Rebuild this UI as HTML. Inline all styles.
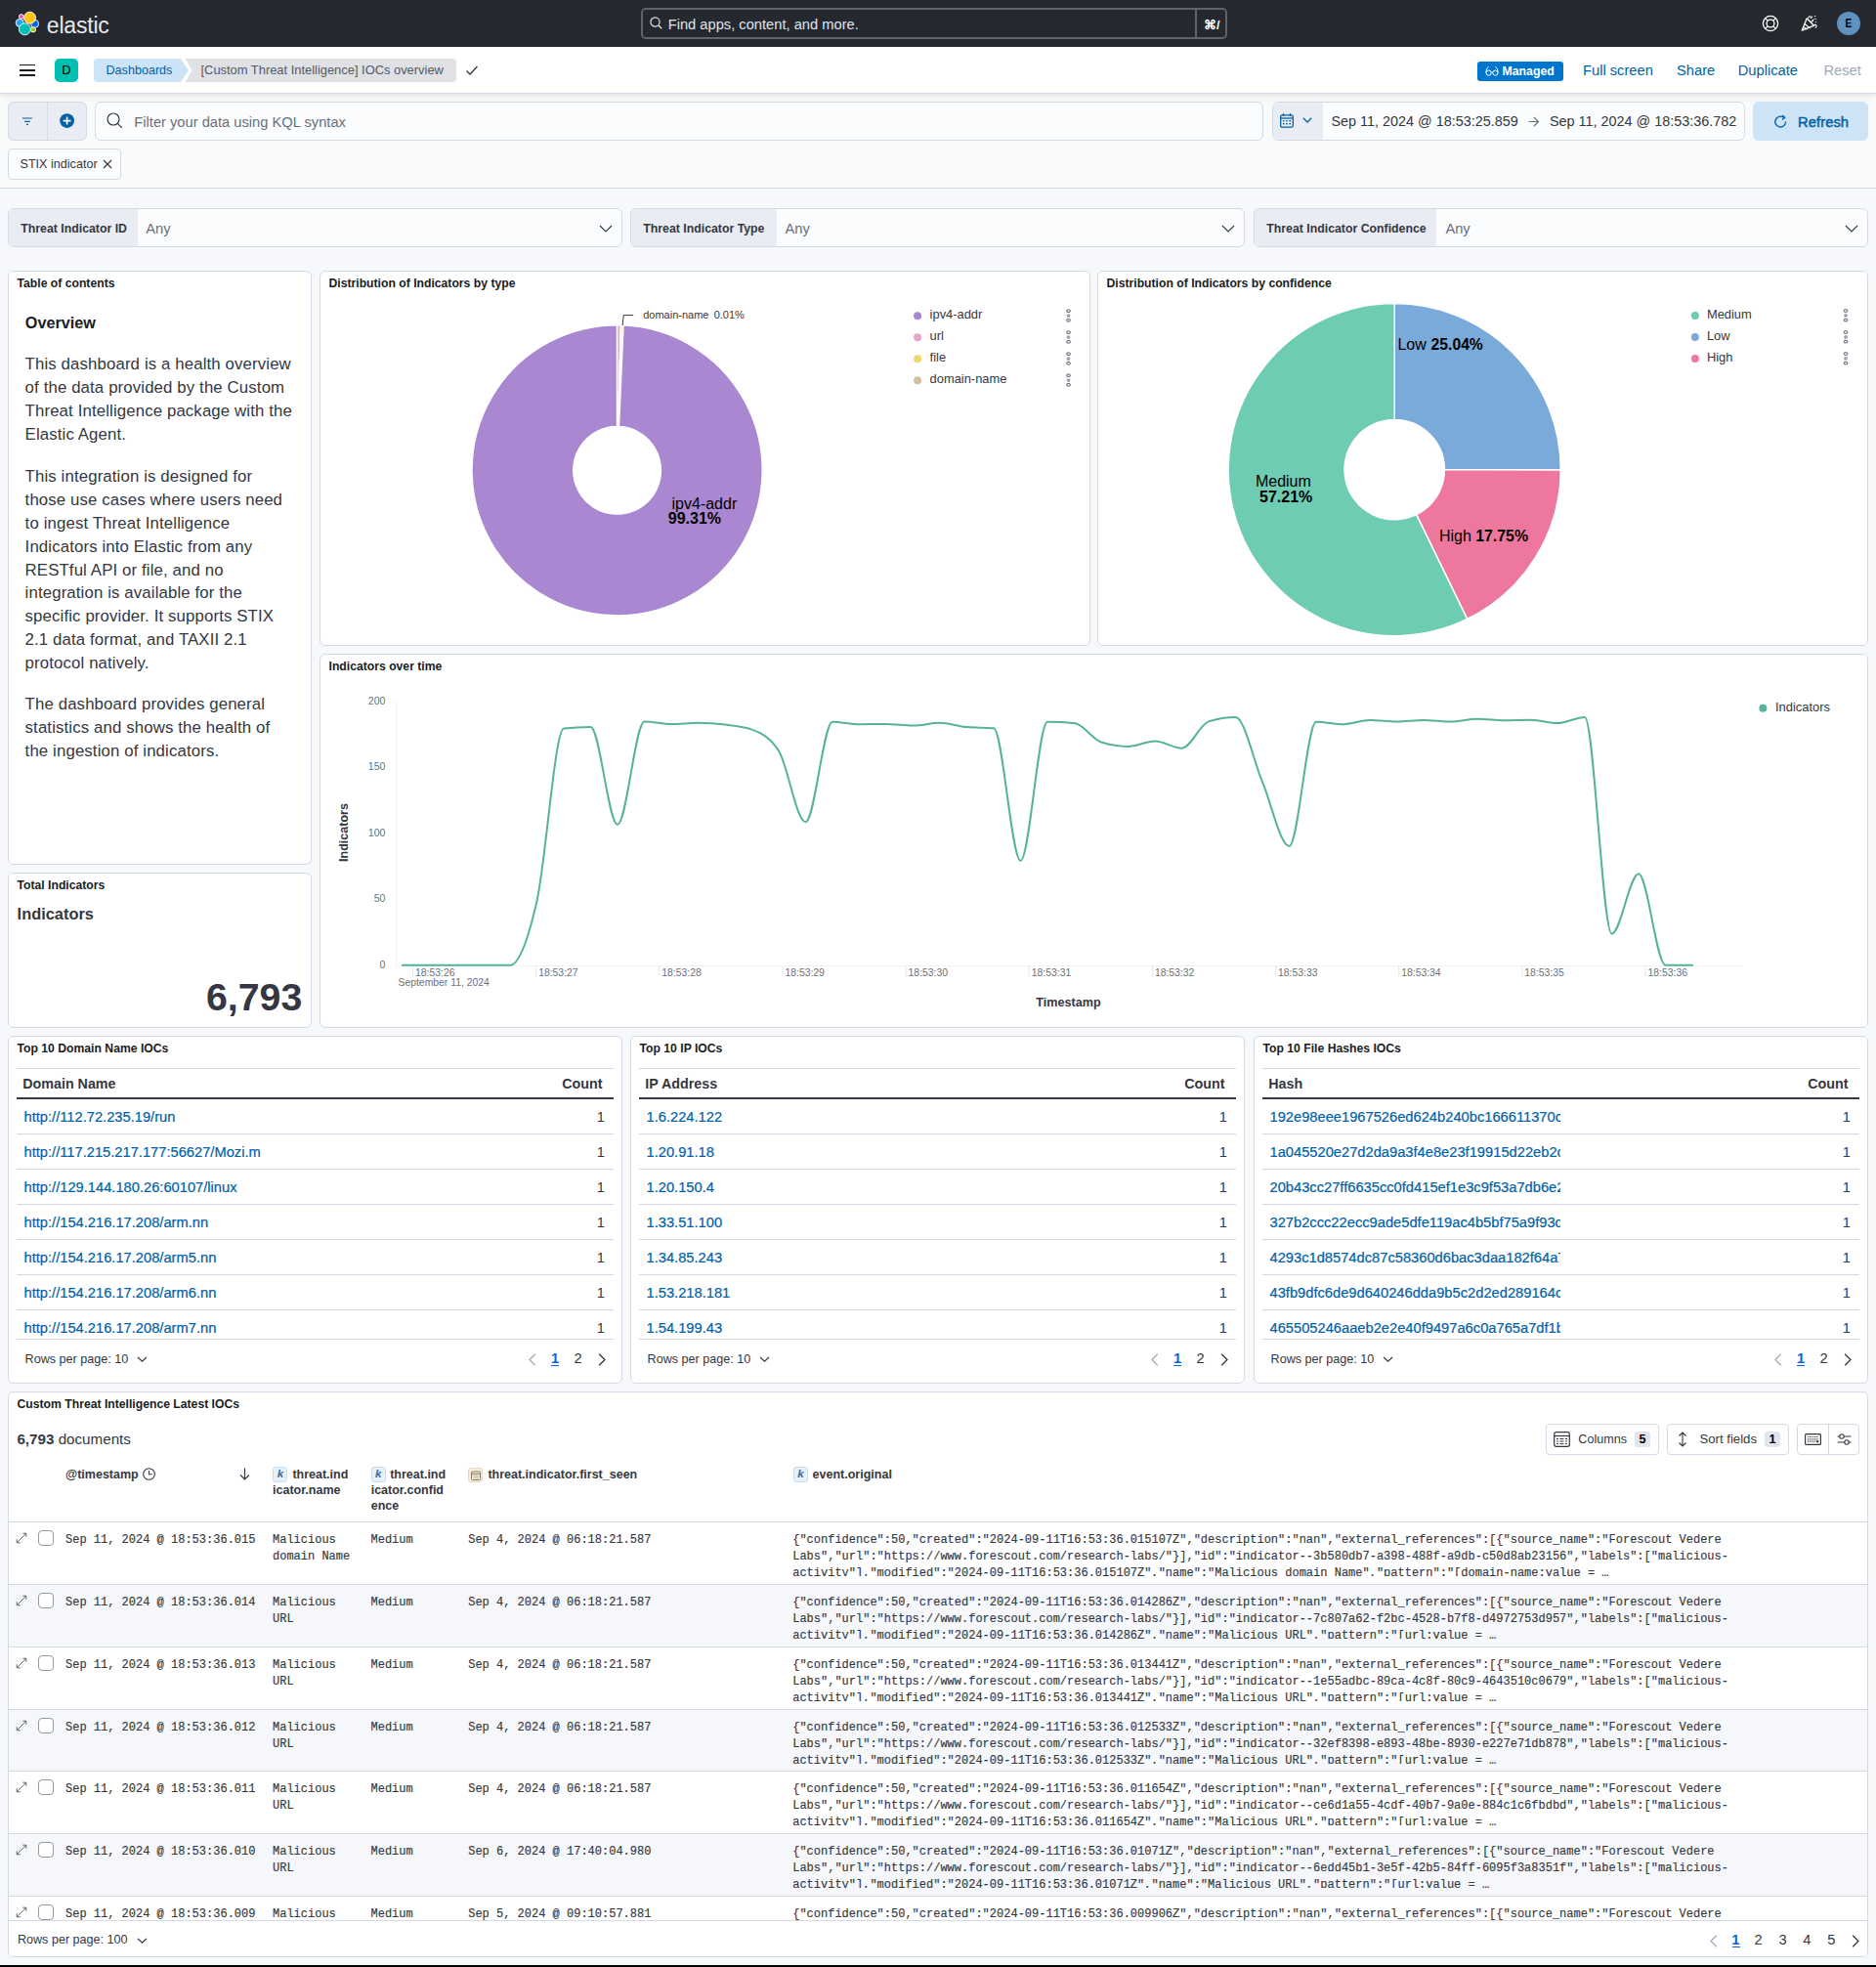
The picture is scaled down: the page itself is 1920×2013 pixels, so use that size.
<!DOCTYPE html>
<html><head><meta charset="utf-8"><title>Dashboard</title>
<style>
html,body{margin:0;padding:0;}
body{width:1920px;height:2013px;position:relative;overflow:hidden;background:#F7F8FC;font-family:"Liberation Sans",sans-serif;}
</style></head><body>
<div style="position:absolute;left:0px;top:0px;width:1920px;height:48px;box-sizing:border-box;background:#25282F;"></div>
<svg style="position:absolute;left:10px;top:8px;overflow:visible;" width="30" height="30" viewBox="0 0 30 30">
      <g stroke="#FFFFFF" stroke-width="0.9">
      <circle cx="11.8" cy="9.0" r="2.4" fill="#F04E98"/>
      <circle cx="10.2" cy="15.4" r="4.0" fill="#1BA9F5"/>
      <circle cx="25.6" cy="16.3" r="4.0" fill="#0B64DD"/>
      <circle cx="24.0" cy="22.4" r="2.6" fill="#93C90E"/>
      <circle cx="20.5" cy="10.2" r="6.0" fill="#FEC514"/>
      <circle cx="15.4" cy="21.8" r="6.0" fill="#00BFB3"/>
      </g>
    </svg>
<div style="position:absolute;left:47.80px;top:14.53px;font-size:23.0px;line-height:23.0px;color:#E6E8EC;font-family:'Liberation Sans', sans-serif;white-space:pre;letter-spacing:-0.2px;">elastic</div>
<div style="position:absolute;left:656px;top:8px;width:600px;height:32px;box-sizing:border-box;border:2px solid #5F636B;border-radius:5px;"></div>
<div style="position:absolute;left:1223px;top:9px;width:2px;height:30px;box-sizing:border-box;background:#5F636B;"></div>
<svg style="position:absolute;left:665px;top:17px;overflow:visible;" width="13" height="13" viewBox="0 0 13 13"><circle cx="5.5" cy="5.5" r="4.6" fill="none" stroke="#DFE5EF" stroke-width="1.2"/><path d="M9 9 L12.2 12.2" stroke="#DFE5EF" stroke-width="1.3"/></svg>
<div style="position:absolute;left:683.70px;top:17.95px;font-size:14.7px;line-height:14.7px;color:#DFE5EF;font-family:'Liberation Sans', sans-serif;white-space:pre;">Find apps, content, and more.</div>
<div style="position:absolute;left:1232.00px;top:19.92px;font-size:12.5px;line-height:12.5px;color:#FFFFFF;font-family:'Liberation Sans', sans-serif;white-space:pre;font-weight:700;">⌘/</div>
<svg style="position:absolute;left:1803px;top:15px;overflow:visible;" width="18" height="18" viewBox="0 0 18 18"><circle cx="9" cy="9" r="7.6" fill="none" stroke="#fff" stroke-width="1.3"/><circle cx="9" cy="9" r="3.9" fill="none" stroke="#fff" stroke-width="1.3"/><path d="M3.6 3.6 L6.2 6.2 M14.4 3.6 L11.8 6.2 M3.6 14.4 L6.2 11.8 M14.4 14.4 L11.8 11.8" stroke="#fff" stroke-width="1.2"/></svg>
<svg style="position:absolute;left:1843px;top:15px;overflow:visible;" width="18" height="18" viewBox="0 0 18 18"><path d="M1.2 16.2 L6.2 3.8 L13.6 11.2 Z" fill="none" stroke="#fff" stroke-width="1.3" stroke-linejoin="round"/><path d="M4.2 9.5 L9.6 14.2 M3 12.6 L6.4 15.2" stroke="#fff" stroke-width="1.1"/><path d="M7.5 3.5 C8.5 0.8 11 1.4 10.2 4.2" fill="none" stroke="#fff" stroke-width="1.1"/><path d="M13.8 10.5 C16.5 9.8 17 12.6 14.6 13.4" fill="none" stroke="#fff" stroke-width="1.1"/><circle cx="11.6" cy="2.2" r="0.7" fill="#fff"/><circle cx="14.6" cy="1.4" r="0.7" fill="#fff"/><circle cx="15" cy="4.4" r="0.7" fill="#fff"/><circle cx="12.2" cy="6.6" r="0.7" fill="#fff"/><circle cx="15.6" cy="7.6" r="0.7" fill="#fff"/><path d="M10.2 7.8 L13.4 4.6" stroke="#fff" stroke-width="1.1"/></svg>
<div style="position:absolute;left:1880px;top:12px;width:24px;height:24px;box-sizing:border-box;background:#6092C0;border-radius:50%;"></div>
<div style="position:absolute;left:1192.00px;width:1400px;text-align:center;top:18.24px;font-size:12.0px;line-height:12.0px;color:#000000;font-family:'Liberation Sans', sans-serif;white-space:pre;font-weight:700;transform:scaleX(0.85);">E</div>
<div style="position:absolute;left:0px;top:96px;width:1920px;height:96px;box-sizing:border-box;background:#F9FAFC;"></div>
<div style="position:absolute;left:0px;top:48px;width:1920px;height:48px;box-sizing:border-box;background:#FFFFFF;border-bottom:1px solid #D3DAE6;box-shadow:0 1px 5px rgba(0,0,0,0.07), 0 3.6px 9px rgba(0,0,0,0.04);"></div>
<div style="position:absolute;left:20px;top:65.8px;width:16px;height:1.7000000000000028px;box-sizing:border-box;background:#1A1C21;"></div>
<div style="position:absolute;left:20px;top:71.0px;width:16px;height:1.7000000000000028px;box-sizing:border-box;background:#1A1C21;"></div>
<div style="position:absolute;left:20px;top:76.3px;width:16px;height:1.7000000000000028px;box-sizing:border-box;background:#1A1C21;"></div>
<div style="position:absolute;left:56px;top:60px;width:24px;height:24px;box-sizing:border-box;background:#00BFB3;border-radius:5px;"></div>
<div style="position:absolute;left:-632.00px;width:1400px;text-align:center;top:65.39px;font-size:13.0px;line-height:13.0px;color:#000000;font-family:'Liberation Sans', sans-serif;white-space:pre;">D</div>
<svg style="position:absolute;left:96px;top:60px;overflow:visible;" width="380" height="24" viewBox="0 0 380 24"><path d="M4 0 L89 0 L97 12 L89 24 L4 24 Q0 24 0 20 L0 4 Q0 0 4 0 Z" fill="#CCE4F5"/><path d="M93.6 0 L367 0 Q371 0 371 4 L371 20 Q371 24 367 24 L93.6 24 L100.6 12 Z" fill="#E0E1E4"/></svg>
<div style="position:absolute;left:108.50px;top:65.63px;font-size:12.6px;line-height:12.6px;color:#0061A6;font-family:'Liberation Sans', sans-serif;white-space:pre;">Dashboards</div>
<div style="position:absolute;left:205.50px;top:66.28px;font-size:12.9px;line-height:12.9px;color:#535966;font-family:'Liberation Sans', sans-serif;white-space:pre;">[Custom Threat Intelligence] IOCs overview</div>
<svg style="position:absolute;left:476px;top:66px;overflow:visible;" width="14" height="12" viewBox="0 0 14 12"><path d="M1.5 6.5 L5 10 L12.5 2" fill="none" stroke="#343741" stroke-width="1.3"/></svg>
<div style="position:absolute;left:1512px;top:63px;width:88px;height:20px;box-sizing:border-box;background:#0077CC;border-radius:3px;"></div>
<svg style="position:absolute;left:1520px;top:67px;overflow:visible;" width="14" height="12" viewBox="0 0 14 12"><circle cx="3.6" cy="7.6" r="2.6" fill="none" stroke="#fff" stroke-width="1"/><circle cx="10.4" cy="7.6" r="2.6" fill="none" stroke="#fff" stroke-width="1"/><path d="M6.2 7.2 Q7 6.4 7.8 7.2 M1 7.4 C1 4 2 2.2 3.6 1.4 M13 7.4 C13 4 12 2.2 10.4 1.4" fill="none" stroke="#fff" stroke-width="1"/></svg>
<div style="position:absolute;left:1537.50px;top:66.79px;font-size:12.3px;line-height:12.3px;color:#FFFFFF;font-family:'Liberation Sans', sans-serif;white-space:pre;font-weight:700;">Managed</div>
<div style="position:absolute;left:1620.00px;top:64.85px;font-size:14.7px;line-height:14.7px;color:#0061A6;font-family:'Liberation Sans', sans-serif;white-space:pre;">Full screen</div>
<div style="position:absolute;left:1716.00px;top:64.85px;font-size:14.7px;line-height:14.7px;color:#0061A6;font-family:'Liberation Sans', sans-serif;white-space:pre;">Share</div>
<div style="position:absolute;left:1778.70px;top:64.85px;font-size:14.7px;line-height:14.7px;color:#0061A6;font-family:'Liberation Sans', sans-serif;white-space:pre;">Duplicate</div>
<div style="position:absolute;left:1866.50px;top:64.85px;font-size:14.7px;line-height:14.7px;color:#A2ABBA;font-family:'Liberation Sans', sans-serif;white-space:pre;">Reset</div>
<div style="position:absolute;left:0px;top:192px;width:1920px;height:1px;box-sizing:border-box;background:#D3DAE6;"></div>
<div style="position:absolute;left:8px;top:104px;width:81px;height:40px;box-sizing:border-box;background:#E9EDF3;border:1px solid #D3DAE6;border-radius:6px;"></div>
<div style="position:absolute;left:48px;top:105px;width:1px;height:38px;box-sizing:border-box;background:#D3DAE6;"></div>
<svg style="position:absolute;left:21px;top:119px;overflow:visible;" width="14" height="10" viewBox="0 0 14 10"><path d="M1.9 2 H11.9 M4.2 5.3 H9.6 M5.9 8.4 H7.9" stroke="#0061A6" stroke-width="1.2"/></svg>
<svg style="position:absolute;left:61px;top:116px;overflow:visible;" width="16" height="16" viewBox="0 0 16 16"><circle cx="7.6" cy="7.6" r="7.4" fill="#0061A6"/><path d="M7.6 3.6 V11.6 M3.6 7.6 H11.6" stroke="#fff" stroke-width="1.6"/></svg>
<div style="position:absolute;left:97px;top:104px;width:1196px;height:40px;box-sizing:border-box;background:#FBFCFD;border:1px solid #D3DAE6;border-radius:6px;"></div>
<svg style="position:absolute;left:109px;top:115px;overflow:visible;" width="17" height="17" viewBox="0 0 17 17"><circle cx="7" cy="7" r="6" fill="none" stroke="#343741" stroke-width="1.2"/><path d="M11.3 11.3 L15.8 15.8" stroke="#343741" stroke-width="1.2"/></svg>
<div style="position:absolute;left:137.30px;top:117.75px;font-size:14.7px;line-height:14.7px;color:#69707D;font-family:'Liberation Sans', sans-serif;white-space:pre;">Filter your data using KQL syntax</div>
<div style="position:absolute;left:1302px;top:104px;width:484px;height:40px;box-sizing:border-box;background:#FBFCFD;border:1px solid #D3DAE6;border-radius:6px;"></div>
<div style="position:absolute;left:1303px;top:105px;width:51px;height:38px;box-sizing:border-box;background:#E9EDF3;border-radius:5px 0 0 5px;"></div>
<svg style="position:absolute;left:1310px;top:116px;overflow:visible;" width="14" height="15" viewBox="0 0 14 15"><rect x="0.7" y="1.8" width="12.6" height="12.4" rx="1.5" fill="none" stroke="#0061A6" stroke-width="1.3"/><path d="M0.7 5 H13.3" stroke="#0061A6" stroke-width="1.3"/><path d="M3.5 0 V3 M10.5 0 V3" stroke="#0061A6" stroke-width="1.3"/><g fill="#0061A6"><rect x="3" y="7" width="1.6" height="1.4"/><rect x="6.2" y="7" width="1.6" height="1.4"/><rect x="9.4" y="7" width="1.6" height="1.4"/><rect x="3" y="10" width="1.6" height="1.4"/><rect x="6.2" y="10" width="1.6" height="1.4"/><rect x="9.4" y="10" width="1.6" height="1.4"/></g></svg>
<svg style="position:absolute;left:1333px;top:120px;overflow:visible;" width="10" height="6" viewBox="0 0 10 6"><path d="M0.8 0.8 L5 5 L9.2 0.8" fill="none" stroke="#0061A6" stroke-width="1.3"/></svg>
<div style="position:absolute;left:1362.50px;top:117.01px;font-size:14.4px;line-height:14.4px;color:#343741;font-family:'Liberation Sans', sans-serif;white-space:pre;">Sep 11, 2024 @ 18:53:25.859</div>
<svg style="position:absolute;left:1564px;top:119px;overflow:visible;" width="12" height="11" viewBox="0 0 12 11"><path d="M0.5 5.5 H10.5 M6 1 L10.5 5.5 L6 10" fill="none" stroke="#69707D" stroke-width="1.2"/></svg>
<div style="position:absolute;left:1586.00px;top:117.01px;font-size:14.4px;line-height:14.4px;color:#343741;font-family:'Liberation Sans', sans-serif;white-space:pre;">Sep 11, 2024 @ 18:53:36.782</div>
<div style="position:absolute;left:1794px;top:104px;width:118px;height:40px;box-sizing:border-box;background:#CCE4F5;border-radius:6px;"></div>
<svg style="position:absolute;left:1815px;top:117px;overflow:visible;" width="15" height="15" viewBox="0 0 15 15"><path d="M12.6 7.5 A5.4 5.4 0 1 1 10.4 3.2" fill="none" stroke="#0061A6" stroke-width="1.4"/><path d="M9.2 1 L11.6 3.2 L9.2 5.6" fill="none" stroke="#0061A6" stroke-width="1.4"/></svg>
<div style="position:absolute;left:1840.00px;top:117.55px;font-size:14.7px;line-height:14.7px;color:#0061A6;font-family:'Liberation Sans', sans-serif;white-space:pre;letter-spacing:0.1px;-webkit-text-stroke:0.45px #0061A6;">Refresh</div>
<div style="position:absolute;left:8px;top:152px;width:116px;height:32px;box-sizing:border-box;background:#FCFDFE;border:1px solid #D3DAE6;border-radius:4px;"></div>
<div style="position:absolute;left:20.50px;top:161.53px;font-size:12.6px;line-height:12.6px;color:#343741;font-family:'Liberation Sans', sans-serif;white-space:pre;">STIX indicator</div>
<svg style="position:absolute;left:105px;top:163px;overflow:visible;" width="10" height="10" viewBox="0 0 10 10"><path d="M1 1 L9 9 M9 1 L1 9" stroke="#343741" stroke-width="1.2"/></svg>
<div style="position:absolute;left:8px;top:213px;width:629px;height:40px;box-sizing:border-box;background:#FBFCFD;border:1px solid #D3DAE6;border-radius:6px;"></div>
<div style="position:absolute;left:9px;top:214px;width:132px;height:38px;box-sizing:border-box;background:#E9EDF3;border-radius:5px 0 0 5px;"></div>
<div style="position:absolute;left:21.30px;top:228.29px;font-size:12.3px;line-height:12.3px;color:#343741;font-family:'Liberation Sans', sans-serif;white-space:pre;font-weight:700;">Threat Indicator ID</div>
<div style="position:absolute;left:149.30px;top:227.15px;font-size:14.7px;line-height:14.7px;color:#69707D;font-family:'Liberation Sans', sans-serif;white-space:pre;">Any</div>
<svg style="position:absolute;left:613px;top:230px;overflow:visible;" width="14" height="8" viewBox="0 0 14 8"><path d="M1 1 L7 7 L13 1" fill="none" stroke="#343741" stroke-width="1.1"/></svg>
<div style="position:absolute;left:645px;top:213px;width:629px;height:40px;box-sizing:border-box;background:#FBFCFD;border:1px solid #D3DAE6;border-radius:6px;"></div>
<div style="position:absolute;left:646px;top:214px;width:149px;height:38px;box-sizing:border-box;background:#E9EDF3;border-radius:5px 0 0 5px;"></div>
<div style="position:absolute;left:658.30px;top:228.29px;font-size:12.3px;line-height:12.3px;color:#343741;font-family:'Liberation Sans', sans-serif;white-space:pre;font-weight:700;">Threat Indicator Type</div>
<div style="position:absolute;left:803.50px;top:227.15px;font-size:14.7px;line-height:14.7px;color:#69707D;font-family:'Liberation Sans', sans-serif;white-space:pre;">Any</div>
<svg style="position:absolute;left:1250px;top:230px;overflow:visible;" width="14" height="8" viewBox="0 0 14 8"><path d="M1 1 L7 7 L13 1" fill="none" stroke="#343741" stroke-width="1.1"/></svg>
<div style="position:absolute;left:1283px;top:213px;width:629px;height:40px;box-sizing:border-box;background:#FBFCFD;border:1px solid #D3DAE6;border-radius:6px;"></div>
<div style="position:absolute;left:1284px;top:214px;width:186px;height:38px;box-sizing:border-box;background:#E9EDF3;border-radius:5px 0 0 5px;"></div>
<div style="position:absolute;left:1296.30px;top:228.29px;font-size:12.3px;line-height:12.3px;color:#343741;font-family:'Liberation Sans', sans-serif;white-space:pre;font-weight:700;">Threat Indicator Confidence</div>
<div style="position:absolute;left:1479.40px;top:227.15px;font-size:14.7px;line-height:14.7px;color:#69707D;font-family:'Liberation Sans', sans-serif;white-space:pre;">Any</div>
<svg style="position:absolute;left:1888px;top:230px;overflow:visible;" width="14" height="8" viewBox="0 0 14 8"><path d="M1 1 L7 7 L13 1" fill="none" stroke="#343741" stroke-width="1.1"/></svg>
<div style="position:absolute;left:8px;top:277px;width:311px;height:608px;box-sizing:border-box;background:#FFFFFF;border:1px solid #D3DAE6;border-radius:6px;"></div>
<div style="position:absolute;left:327px;top:277px;width:789px;height:384px;box-sizing:border-box;background:#FFFFFF;border:1px solid #D3DAE6;border-radius:6px;"></div>
<div style="position:absolute;left:1123px;top:277px;width:789px;height:384px;box-sizing:border-box;background:#FFFFFF;border:1px solid #D3DAE6;border-radius:6px;"></div>
<div style="position:absolute;left:8px;top:893px;width:311px;height:159px;box-sizing:border-box;background:#FFFFFF;border:1px solid #D3DAE6;border-radius:6px;"></div>
<div style="position:absolute;left:327px;top:669px;width:1585px;height:383px;box-sizing:border-box;background:#FFFFFF;border:1px solid #D3DAE6;border-radius:6px;"></div>
<div style="position:absolute;left:8px;top:1060px;width:629px;height:356px;box-sizing:border-box;background:#FFFFFF;border:1px solid #D3DAE6;border-radius:6px;"></div>
<div style="position:absolute;left:645px;top:1060px;width:629px;height:356px;box-sizing:border-box;background:#FFFFFF;border:1px solid #D3DAE6;border-radius:6px;"></div>
<div style="position:absolute;left:1283px;top:1060px;width:629px;height:356px;box-sizing:border-box;background:#FFFFFF;border:1px solid #D3DAE6;border-radius:6px;"></div>
<div style="position:absolute;left:8px;top:1424px;width:1904px;height:579px;box-sizing:border-box;background:#FFFFFF;border:1px solid #D3DAE6;border-radius:6px;"></div>
<div style="position:absolute;left:17.50px;top:284.27px;font-size:12.2px;line-height:12.2px;color:#1A1C21;font-family:'Liberation Sans', sans-serif;white-space:pre;font-weight:700;">Table of contents</div>
<div style="position:absolute;left:336.50px;top:284.27px;font-size:12.2px;line-height:12.2px;color:#1A1C21;font-family:'Liberation Sans', sans-serif;white-space:pre;font-weight:700;">Distribution of Indicators by type</div>
<div style="position:absolute;left:1132.50px;top:284.27px;font-size:12.2px;line-height:12.2px;color:#1A1C21;font-family:'Liberation Sans', sans-serif;white-space:pre;font-weight:700;">Distribution of Indicators by confidence</div>
<div style="position:absolute;left:17.50px;top:900.27px;font-size:12.2px;line-height:12.2px;color:#1A1C21;font-family:'Liberation Sans', sans-serif;white-space:pre;font-weight:700;">Total Indicators</div>
<div style="position:absolute;left:336.50px;top:676.27px;font-size:12.2px;line-height:12.2px;color:#1A1C21;font-family:'Liberation Sans', sans-serif;white-space:pre;font-weight:700;">Indicators over time</div>
<div style="position:absolute;left:17.50px;top:1067.27px;font-size:12.2px;line-height:12.2px;color:#1A1C21;font-family:'Liberation Sans', sans-serif;white-space:pre;font-weight:700;">Top 10 Domain Name IOCs</div>
<div style="position:absolute;left:654.50px;top:1067.27px;font-size:12.2px;line-height:12.2px;color:#1A1C21;font-family:'Liberation Sans', sans-serif;white-space:pre;font-weight:700;">Top 10 IP IOCs</div>
<div style="position:absolute;left:1292.50px;top:1067.27px;font-size:12.2px;line-height:12.2px;color:#1A1C21;font-family:'Liberation Sans', sans-serif;white-space:pre;font-weight:700;">Top 10 File Hashes IOCs</div>
<div style="position:absolute;left:17.50px;top:1431.27px;font-size:12.2px;line-height:12.2px;color:#1A1C21;font-family:'Liberation Sans', sans-serif;white-space:pre;font-weight:700;">Custom Threat Intelligence Latest IOCs</div>
<div style="position:absolute;left:25.80px;top:321.88px;font-size:16.2px;line-height:16.2px;color:#1A1C21;font-family:'Liberation Sans', sans-serif;white-space:pre;font-weight:700;">Overview</div>
<div style="position:absolute;left:25.60px;top:364.98px;font-size:16.8px;line-height:16.8px;color:#343741;font-family:'Liberation Sans', sans-serif;white-space:pre;letter-spacing:0.13px;">This dashboard is a health overview</div>
<div style="position:absolute;left:25.60px;top:388.88px;font-size:16.8px;line-height:16.8px;color:#343741;font-family:'Liberation Sans', sans-serif;white-space:pre;letter-spacing:0.13px;">of the data provided by the Custom</div>
<div style="position:absolute;left:25.60px;top:412.78px;font-size:16.8px;line-height:16.8px;color:#343741;font-family:'Liberation Sans', sans-serif;white-space:pre;letter-spacing:0.13px;">Threat Intelligence package with the</div>
<div style="position:absolute;left:25.60px;top:436.68px;font-size:16.8px;line-height:16.8px;color:#343741;font-family:'Liberation Sans', sans-serif;white-space:pre;letter-spacing:0.13px;">Elastic Agent.</div>
<div style="position:absolute;left:25.60px;top:479.98px;font-size:16.8px;line-height:16.8px;color:#343741;font-family:'Liberation Sans', sans-serif;white-space:pre;letter-spacing:0.13px;">This integration is designed for</div>
<div style="position:absolute;left:25.60px;top:503.88px;font-size:16.8px;line-height:16.8px;color:#343741;font-family:'Liberation Sans', sans-serif;white-space:pre;letter-spacing:0.13px;">those use cases where users need</div>
<div style="position:absolute;left:25.60px;top:527.78px;font-size:16.8px;line-height:16.8px;color:#343741;font-family:'Liberation Sans', sans-serif;white-space:pre;letter-spacing:0.13px;">to ingest Threat Intelligence</div>
<div style="position:absolute;left:25.60px;top:551.68px;font-size:16.8px;line-height:16.8px;color:#343741;font-family:'Liberation Sans', sans-serif;white-space:pre;letter-spacing:0.13px;">Indicators into Elastic from any</div>
<div style="position:absolute;left:25.60px;top:575.58px;font-size:16.8px;line-height:16.8px;color:#343741;font-family:'Liberation Sans', sans-serif;white-space:pre;letter-spacing:0.13px;">RESTful API or file, and no</div>
<div style="position:absolute;left:25.60px;top:599.48px;font-size:16.8px;line-height:16.8px;color:#343741;font-family:'Liberation Sans', sans-serif;white-space:pre;letter-spacing:0.13px;">integration is available for the</div>
<div style="position:absolute;left:25.60px;top:623.38px;font-size:16.8px;line-height:16.8px;color:#343741;font-family:'Liberation Sans', sans-serif;white-space:pre;letter-spacing:0.13px;">specific provider. It supports STIX</div>
<div style="position:absolute;left:25.60px;top:647.28px;font-size:16.8px;line-height:16.8px;color:#343741;font-family:'Liberation Sans', sans-serif;white-space:pre;letter-spacing:0.13px;">2.1 data format, and TAXII 2.1</div>
<div style="position:absolute;left:25.60px;top:671.18px;font-size:16.8px;line-height:16.8px;color:#343741;font-family:'Liberation Sans', sans-serif;white-space:pre;letter-spacing:0.13px;">protocol natively.</div>
<div style="position:absolute;left:25.60px;top:713.28px;font-size:16.8px;line-height:16.8px;color:#343741;font-family:'Liberation Sans', sans-serif;white-space:pre;letter-spacing:0.13px;">The dashboard provides general</div>
<div style="position:absolute;left:25.60px;top:737.18px;font-size:16.8px;line-height:16.8px;color:#343741;font-family:'Liberation Sans', sans-serif;white-space:pre;letter-spacing:0.13px;">statistics and shows the health of</div>
<div style="position:absolute;left:25.60px;top:761.08px;font-size:16.8px;line-height:16.8px;color:#343741;font-family:'Liberation Sans', sans-serif;white-space:pre;letter-spacing:0.13px;">the ingestion of indicators.</div>
<div style="position:absolute;left:17.60px;top:926.81px;font-size:16.4px;line-height:16.4px;color:#343741;font-family:'Liberation Sans', sans-serif;white-space:pre;font-weight:700;">Indicators</div>
<div style="position:absolute;left:-1090.70px;width:1400px;text-align:right;top:1000.72px;font-size:39.3px;line-height:39.3px;color:#343741;font-family:'Liberation Sans', sans-serif;white-space:pre;font-weight:700;">6,793</div>
<svg style="position:absolute;left:0;top:0;" width="1920" height="700" viewBox="0 0 1920 700"><path d="M631.50 332.70 A148.6 148.6 0 0 1 635.42 332.75 L632.68 436.52 A44.8 44.8 0 0 0 631.50 436.50 Z" fill="#E4A6C7" stroke="#FFFFFF" stroke-width="1.5" stroke-linejoin="round"/><path d="M635.42 332.75 A148.6 148.6 0 0 1 637.66 332.83 L633.36 436.54 A44.8 44.8 0 0 0 632.68 436.52 Z" fill="#F1D86F" stroke="#FFFFFF" stroke-width="1.5" stroke-linejoin="round"/><path d="M637.66 332.83 A148.6 148.6 0 0 1 638.03 332.84 L633.47 436.54 A44.8 44.8 0 0 0 633.36 436.54 Z" fill="#D2C0A0" stroke="#FFFFFF" stroke-width="1.5" stroke-linejoin="round"/><path d="M638.03 332.84 A148.6 148.6 0 1 1 631.50 332.70 L631.50 436.50 A44.8 44.8 0 1 0 633.47 436.54 Z" fill="#A987D1" stroke="#FFFFFF" stroke-width="1.5" stroke-linejoin="round"/><path d="M637.2 333 L638.2 322.6 L648.2 322.6" fill="none" stroke="#343741" stroke-width="1"/><circle cx="939.1" cy="323.3" r="4" fill="#A987D1"/><rect x="1091.8" y="317.0" width="3.4" height="2.4" rx="0.4" fill="none" stroke="#5A606B" stroke-width="1"/><circle cx="1093.5" cy="323.1" r="1.9" fill="#98A2B3"/><rect x="1091.8" y="326.6" width="3.4" height="2.4" rx="0.4" fill="none" stroke="#5A606B" stroke-width="1"/><circle cx="939.1" cy="345.3" r="4" fill="#E4A6C7"/><rect x="1091.8" y="339.0" width="3.4" height="2.4" rx="0.4" fill="none" stroke="#5A606B" stroke-width="1"/><circle cx="1093.5" cy="345.1" r="1.9" fill="#98A2B3"/><rect x="1091.8" y="348.6" width="3.4" height="2.4" rx="0.4" fill="none" stroke="#5A606B" stroke-width="1"/><circle cx="939.1" cy="367.3" r="4" fill="#F1D86F"/><rect x="1091.8" y="361.0" width="3.4" height="2.4" rx="0.4" fill="none" stroke="#5A606B" stroke-width="1"/><circle cx="1093.5" cy="367.1" r="1.9" fill="#98A2B3"/><rect x="1091.8" y="370.6" width="3.4" height="2.4" rx="0.4" fill="none" stroke="#5A606B" stroke-width="1"/><circle cx="939.1" cy="389.3" r="4" fill="#D2C0A0"/><rect x="1091.8" y="383.0" width="3.4" height="2.4" rx="0.4" fill="none" stroke="#5A606B" stroke-width="1"/><circle cx="1093.5" cy="389.1" r="1.9" fill="#98A2B3"/><rect x="1091.8" y="392.6" width="3.4" height="2.4" rx="0.4" fill="none" stroke="#5A606B" stroke-width="1"/><path d="M1427.20 310.50 A170.1 170.1 0 0 1 1597.30 481.03 L1478.40 480.73 A51.2 51.2 0 0 0 1427.20 429.40 Z" fill="#79AAD9" stroke="#FFFFFF" stroke-width="1.5" stroke-linejoin="round"/><path d="M1597.30 481.03 A170.1 170.1 0 0 1 1501.65 633.54 L1449.61 526.64 A51.2 51.2 0 0 0 1478.40 480.73 Z" fill="#EE789D" stroke="#FFFFFF" stroke-width="1.5" stroke-linejoin="round"/><path d="M1501.65 633.54 A170.1 170.1 0 1 1 1427.20 310.50 L1427.20 429.40 A51.2 51.2 0 1 0 1449.61 526.64 Z" fill="#6DCCB1" stroke="#FFFFFF" stroke-width="1.5" stroke-linejoin="round"/><circle cx="1734.9" cy="323.1" r="4" fill="#6DCCB1"/><rect x="1887.3" y="316.8" width="3.4" height="2.4" rx="0.4" fill="none" stroke="#5A606B" stroke-width="1"/><circle cx="1889.0" cy="322.90000000000003" r="1.9" fill="#98A2B3"/><rect x="1887.3" y="326.40000000000003" width="3.4" height="2.4" rx="0.4" fill="none" stroke="#5A606B" stroke-width="1"/><circle cx="1734.9" cy="345.1" r="4" fill="#79AAD9"/><rect x="1887.3" y="338.8" width="3.4" height="2.4" rx="0.4" fill="none" stroke="#5A606B" stroke-width="1"/><circle cx="1889.0" cy="344.90000000000003" r="1.9" fill="#98A2B3"/><rect x="1887.3" y="348.40000000000003" width="3.4" height="2.4" rx="0.4" fill="none" stroke="#5A606B" stroke-width="1"/><circle cx="1734.9" cy="367.1" r="4" fill="#EE789D"/><rect x="1887.3" y="360.8" width="3.4" height="2.4" rx="0.4" fill="none" stroke="#5A606B" stroke-width="1"/><circle cx="1889.0" cy="366.90000000000003" r="1.9" fill="#98A2B3"/><rect x="1887.3" y="370.40000000000003" width="3.4" height="2.4" rx="0.4" fill="none" stroke="#5A606B" stroke-width="1"/></svg>
<div style="position:absolute;left:658.20px;top:316.99px;font-size:11.0px;line-height:11.0px;color:#343741;font-family:'Liberation Sans', sans-serif;white-space:pre;">domain-name</div>
<div style="position:absolute;left:730.70px;top:316.99px;font-size:11.0px;line-height:11.0px;color:#343741;font-family:'Liberation Sans', sans-serif;white-space:pre;">0.01%</div>
<div style="position:absolute;left:20.90px;width:1400px;text-align:center;top:508.05px;font-size:16.0px;line-height:16.0px;color:#000000;font-family:'Liberation Sans', sans-serif;white-space:pre;">ipv4-addr</div>
<div style="position:absolute;left:10.90px;width:1400px;text-align:center;top:523.45px;font-size:16.0px;line-height:16.0px;color:#000000;font-family:'Liberation Sans', sans-serif;white-space:pre;font-weight:700;">99.31%</div>
<div style="position:absolute;left:951.60px;top:315.78px;font-size:12.9px;line-height:12.9px;color:#343741;font-family:'Liberation Sans', sans-serif;white-space:pre;">ipv4-addr</div>
<div style="position:absolute;left:951.60px;top:337.78px;font-size:12.9px;line-height:12.9px;color:#343741;font-family:'Liberation Sans', sans-serif;white-space:pre;">url</div>
<div style="position:absolute;left:951.60px;top:359.78px;font-size:12.9px;line-height:12.9px;color:#343741;font-family:'Liberation Sans', sans-serif;white-space:pre;">file</div>
<div style="position:absolute;left:951.60px;top:381.78px;font-size:12.9px;line-height:12.9px;color:#343741;font-family:'Liberation Sans', sans-serif;white-space:pre;">domain-name</div>
<div style="position:absolute;left:1746.90px;top:315.58px;font-size:12.9px;line-height:12.9px;color:#343741;font-family:'Liberation Sans', sans-serif;white-space:pre;">Medium</div>
<div style="position:absolute;left:1746.90px;top:337.58px;font-size:12.9px;line-height:12.9px;color:#343741;font-family:'Liberation Sans', sans-serif;white-space:pre;">Low</div>
<div style="position:absolute;left:1746.90px;top:359.58px;font-size:12.9px;line-height:12.9px;color:#343741;font-family:'Liberation Sans', sans-serif;white-space:pre;">High</div>
<div style="position:absolute;left:1430.40px;top:344.75px;font-size:16.0px;line-height:16.0px;color:#000000;font-family:'Liberation Sans', sans-serif;white-space:pre;">Low</div>
<div style="position:absolute;left:1464.60px;top:345.01px;font-size:15.7px;line-height:15.7px;color:#000000;font-family:'Liberation Sans', sans-serif;white-space:pre;font-weight:700;">25.04%</div>
<div style="position:absolute;left:613.40px;width:1400px;text-align:center;top:485.45px;font-size:16.0px;line-height:16.0px;color:#000000;font-family:'Liberation Sans', sans-serif;white-space:pre;">Medium</div>
<div style="position:absolute;left:616.20px;width:1400px;text-align:center;top:500.75px;font-size:16.0px;line-height:16.0px;color:#000000;font-family:'Liberation Sans', sans-serif;white-space:pre;font-weight:700;">57.21%</div>
<div style="position:absolute;left:1473.00px;top:541.35px;font-size:16.0px;line-height:16.0px;color:#000000;font-family:'Liberation Sans', sans-serif;white-space:pre;">High</div>
<div style="position:absolute;left:1510.20px;top:541.44px;font-size:15.9px;line-height:15.9px;color:#000000;font-family:'Liberation Sans', sans-serif;white-space:pre;font-weight:700;">17.75%</div>
<svg style="position:absolute;left:0;top:0;" width="1920" height="1060" viewBox="0 0 1920 1060"><path d="M405.5 717 V988.5 H1783" fill="none" stroke="#EEF0F4" stroke-width="1"/><path d="M422.5 988 V999" stroke="#E3E6EC" stroke-width="1"/><path d="M548.6 988 V999" stroke="#E3E6EC" stroke-width="1"/><path d="M674.8 988 V999" stroke="#E3E6EC" stroke-width="1"/><path d="M801.0 988 V999" stroke="#E3E6EC" stroke-width="1"/><path d="M927.1 988 V999" stroke="#E3E6EC" stroke-width="1"/><path d="M1053.2 988 V999" stroke="#E3E6EC" stroke-width="1"/><path d="M1179.4 988 V999" stroke="#E3E6EC" stroke-width="1"/><path d="M1305.6 988 V999" stroke="#E3E6EC" stroke-width="1"/><path d="M1431.7 988 V999" stroke="#E3E6EC" stroke-width="1"/><path d="M1557.9 988 V999" stroke="#E3E6EC" stroke-width="1"/><path d="M1684.0 988 V999" stroke="#E3E6EC" stroke-width="1"/><path d="M412.00 987.70 C421.17 987.70 430.33 987.70 439.50 987.70 C448.67 987.70 457.83 987.70 467.00 987.70 C476.17 987.70 485.33 987.70 494.50 987.70 C503.67 987.70 512.83 987.70 522.00 987.70 C531.17 987.70 540.33 962.35 549.50 922.00 C558.67 881.65 567.83 746.73 577.00 745.60 C586.17 744.47 595.33 743.90 604.50 743.90 C613.67 743.90 622.83 843.80 632.00 843.80 C641.17 843.80 650.33 738.50 659.50 738.50 C668.67 738.50 677.83 741.10 687.00 741.10 C696.17 741.10 705.33 739.70 714.50 739.70 C723.67 739.70 732.83 740.45 742.00 741.60 C751.17 742.75 760.33 743.27 769.50 746.60 C778.67 749.93 787.83 753.90 797.00 768.50 C806.17 783.10 815.33 841.20 824.50 841.20 C833.67 841.20 842.83 738.80 852.00 738.80 C861.17 738.80 870.33 741.20 879.50 741.20 C888.67 741.20 897.83 741.00 907.00 741.00 C916.17 741.00 925.33 742.60 934.50 742.60 C943.67 742.60 952.83 739.70 962.00 739.70 C971.17 739.70 980.33 743.37 989.50 744.10 C998.67 744.83 1007.83 744.47 1017.00 745.20 C1026.17 745.93 1035.33 880.80 1044.50 880.80 C1053.67 880.80 1062.83 738.80 1072.00 738.80 C1081.17 738.80 1090.33 739.17 1099.50 739.90 C1108.67 740.63 1117.83 756.50 1127.00 759.50 C1136.17 762.50 1145.33 764.00 1154.50 764.00 C1163.67 764.00 1172.83 758.60 1182.00 758.60 C1191.17 758.60 1200.33 765.70 1209.50 765.70 C1218.67 765.70 1227.83 741.27 1237.00 738.40 C1246.17 735.53 1255.33 734.10 1264.50 734.10 C1273.67 734.10 1282.83 778.23 1292.00 800.20 C1301.17 822.17 1310.33 865.90 1319.50 865.90 C1328.67 865.90 1337.83 738.80 1347.00 738.80 C1356.17 738.80 1365.33 741.20 1374.50 741.20 C1383.67 741.20 1392.83 736.90 1402.00 736.90 C1411.17 736.90 1420.33 738.40 1429.50 738.40 C1438.67 738.40 1447.83 736.90 1457.00 736.90 C1466.17 736.90 1475.33 738.60 1484.50 738.60 C1493.67 738.60 1502.83 735.80 1512.00 735.80 C1521.17 735.80 1530.33 737.20 1539.50 737.20 C1548.67 737.20 1557.83 736.80 1567.00 736.80 C1576.17 736.80 1585.33 740.00 1594.50 740.00 C1603.67 740.00 1612.83 733.90 1622.00 733.90 C1631.17 733.90 1640.33 955.60 1649.50 955.60 C1658.67 955.60 1667.83 894.30 1677.00 894.30 C1686.17 894.30 1695.33 987.70 1704.50 987.70 C1713.67 987.70 1722.83 987.70 1732.00 987.70" fill="none" stroke="#54B399" stroke-width="2" stroke-linejoin="round" stroke-linecap="round"/><circle cx="1804.4" cy="724.8" r="4" fill="#54B399"/></svg>
<div style="position:absolute;left:-1005.50px;width:1400px;text-align:right;top:982.02px;font-size:10.6px;line-height:10.6px;color:#69707D;font-family:'Liberation Sans', sans-serif;white-space:pre;">0</div>
<div style="position:absolute;left:-1005.50px;width:1400px;text-align:right;top:914.40px;font-size:10.6px;line-height:10.6px;color:#69707D;font-family:'Liberation Sans', sans-serif;white-space:pre;">50</div>
<div style="position:absolute;left:-1005.50px;width:1400px;text-align:right;top:846.77px;font-size:10.6px;line-height:10.6px;color:#69707D;font-family:'Liberation Sans', sans-serif;white-space:pre;">100</div>
<div style="position:absolute;left:-1005.50px;width:1400px;text-align:right;top:779.15px;font-size:10.6px;line-height:10.6px;color:#69707D;font-family:'Liberation Sans', sans-serif;white-space:pre;">150</div>
<div style="position:absolute;left:-1005.50px;width:1400px;text-align:right;top:711.52px;font-size:10.6px;line-height:10.6px;color:#69707D;font-family:'Liberation Sans', sans-serif;white-space:pre;">200</div>
<div style="position:absolute;left:425.00px;top:990.79px;font-size:10.4px;line-height:10.4px;color:#69707D;font-family:'Liberation Sans', sans-serif;white-space:pre;">18:53:26</div>
<div style="position:absolute;left:551.15px;top:990.79px;font-size:10.4px;line-height:10.4px;color:#69707D;font-family:'Liberation Sans', sans-serif;white-space:pre;">18:53:27</div>
<div style="position:absolute;left:677.30px;top:990.79px;font-size:10.4px;line-height:10.4px;color:#69707D;font-family:'Liberation Sans', sans-serif;white-space:pre;">18:53:28</div>
<div style="position:absolute;left:803.45px;top:990.79px;font-size:10.4px;line-height:10.4px;color:#69707D;font-family:'Liberation Sans', sans-serif;white-space:pre;">18:53:29</div>
<div style="position:absolute;left:929.60px;top:990.79px;font-size:10.4px;line-height:10.4px;color:#69707D;font-family:'Liberation Sans', sans-serif;white-space:pre;">18:53:30</div>
<div style="position:absolute;left:1055.75px;top:990.79px;font-size:10.4px;line-height:10.4px;color:#69707D;font-family:'Liberation Sans', sans-serif;white-space:pre;">18:53:31</div>
<div style="position:absolute;left:1181.90px;top:990.79px;font-size:10.4px;line-height:10.4px;color:#69707D;font-family:'Liberation Sans', sans-serif;white-space:pre;">18:53:32</div>
<div style="position:absolute;left:1308.05px;top:990.79px;font-size:10.4px;line-height:10.4px;color:#69707D;font-family:'Liberation Sans', sans-serif;white-space:pre;">18:53:33</div>
<div style="position:absolute;left:1434.20px;top:990.79px;font-size:10.4px;line-height:10.4px;color:#69707D;font-family:'Liberation Sans', sans-serif;white-space:pre;">18:53:34</div>
<div style="position:absolute;left:1560.35px;top:990.79px;font-size:10.4px;line-height:10.4px;color:#69707D;font-family:'Liberation Sans', sans-serif;white-space:pre;">18:53:35</div>
<div style="position:absolute;left:1686.50px;top:990.79px;font-size:10.4px;line-height:10.4px;color:#69707D;font-family:'Liberation Sans', sans-serif;white-space:pre;">18:53:36</div>
<div style="position:absolute;left:407.50px;top:1000.79px;font-size:10.4px;line-height:10.4px;color:#69707D;font-family:'Liberation Sans', sans-serif;white-space:pre;">September 11, 2024</div>
<div style="position:absolute;left:393.50px;width:1400px;text-align:center;top:1020.33px;font-size:12.6px;line-height:12.6px;color:#343741;font-family:'Liberation Sans', sans-serif;white-space:pre;font-weight:700;">Timestamp</div>
<div style="position:absolute;left:252px;top:845px;width:200px;height:14px;line-height:14px;text-align:center;font-size:12.5px;font-weight:700;color:#343741;font-family:'Liberation Sans', sans-serif;transform:rotate(-90deg);">Indicators</div>
<div style="position:absolute;left:1817.00px;top:717.68px;font-size:12.9px;line-height:12.9px;color:#343741;font-family:'Liberation Sans', sans-serif;white-space:pre;">Indicators</div>
<div style="position:absolute;left:17px;top:1093px;width:611px;height:1px;box-sizing:border-box;background:#D3DAE6;"></div>
<div style="position:absolute;left:23.20px;top:1102.39px;font-size:14.3px;line-height:14.3px;color:#343741;font-family:'Liberation Sans', sans-serif;white-space:pre;font-weight:700;">Domain Name</div>
<div style="position:absolute;left:-783.50px;width:1400px;text-align:right;top:1102.39px;font-size:14.3px;line-height:14.3px;color:#343741;font-family:'Liberation Sans', sans-serif;white-space:pre;font-weight:700;">Count</div>
<div style="position:absolute;left:17px;top:1123px;width:611px;height:2px;box-sizing:border-box;background:#343741;"></div>
<div style="position:absolute;left:17px;top:1125px;width:304.5px;height:35px;overflow:hidden;"><div style="position:absolute;left:7.5px;top:11.05px;font-size:14.7px;line-height:14.7px;color:#0061A6;font-family:'Liberation Sans', sans-serif;white-space:pre;-webkit-text-stroke:0.2px #0061A6;">http://112.72.235.19/run</div></div>
<div style="position:absolute;left:-781.00px;width:1400px;text-align:right;top:1136.05px;font-size:14.7px;line-height:14.7px;color:#343741;font-family:'Liberation Sans', sans-serif;white-space:pre;">1</div>
<div style="position:absolute;left:17px;top:1161px;width:304.5px;height:35px;overflow:hidden;"><div style="position:absolute;left:7.5px;top:11.05px;font-size:14.7px;line-height:14.7px;color:#0061A6;font-family:'Liberation Sans', sans-serif;white-space:pre;-webkit-text-stroke:0.2px #0061A6;">http://117.215.217.177:56627/Mozi.m</div></div>
<div style="position:absolute;left:-781.00px;width:1400px;text-align:right;top:1172.05px;font-size:14.7px;line-height:14.7px;color:#343741;font-family:'Liberation Sans', sans-serif;white-space:pre;">1</div>
<div style="position:absolute;left:17px;top:1197px;width:304.5px;height:35px;overflow:hidden;"><div style="position:absolute;left:7.5px;top:11.05px;font-size:14.7px;line-height:14.7px;color:#0061A6;font-family:'Liberation Sans', sans-serif;white-space:pre;-webkit-text-stroke:0.2px #0061A6;">http://129.144.180.26:60107/linux</div></div>
<div style="position:absolute;left:-781.00px;width:1400px;text-align:right;top:1208.05px;font-size:14.7px;line-height:14.7px;color:#343741;font-family:'Liberation Sans', sans-serif;white-space:pre;">1</div>
<div style="position:absolute;left:17px;top:1233px;width:304.5px;height:35px;overflow:hidden;"><div style="position:absolute;left:7.5px;top:11.05px;font-size:14.7px;line-height:14.7px;color:#0061A6;font-family:'Liberation Sans', sans-serif;white-space:pre;-webkit-text-stroke:0.2px #0061A6;">http://154.216.17.208/arm.nn</div></div>
<div style="position:absolute;left:-781.00px;width:1400px;text-align:right;top:1244.05px;font-size:14.7px;line-height:14.7px;color:#343741;font-family:'Liberation Sans', sans-serif;white-space:pre;">1</div>
<div style="position:absolute;left:17px;top:1269px;width:304.5px;height:35px;overflow:hidden;"><div style="position:absolute;left:7.5px;top:11.05px;font-size:14.7px;line-height:14.7px;color:#0061A6;font-family:'Liberation Sans', sans-serif;white-space:pre;-webkit-text-stroke:0.2px #0061A6;">http://154.216.17.208/arm5.nn</div></div>
<div style="position:absolute;left:-781.00px;width:1400px;text-align:right;top:1280.05px;font-size:14.7px;line-height:14.7px;color:#343741;font-family:'Liberation Sans', sans-serif;white-space:pre;">1</div>
<div style="position:absolute;left:17px;top:1305px;width:304.5px;height:35px;overflow:hidden;"><div style="position:absolute;left:7.5px;top:11.05px;font-size:14.7px;line-height:14.7px;color:#0061A6;font-family:'Liberation Sans', sans-serif;white-space:pre;-webkit-text-stroke:0.2px #0061A6;">http://154.216.17.208/arm6.nn</div></div>
<div style="position:absolute;left:-781.00px;width:1400px;text-align:right;top:1316.05px;font-size:14.7px;line-height:14.7px;color:#343741;font-family:'Liberation Sans', sans-serif;white-space:pre;">1</div>
<div style="position:absolute;left:17px;top:1341px;width:304.5px;height:35px;overflow:hidden;"><div style="position:absolute;left:7.5px;top:11.05px;font-size:14.7px;line-height:14.7px;color:#0061A6;font-family:'Liberation Sans', sans-serif;white-space:pre;-webkit-text-stroke:0.2px #0061A6;">http://154.216.17.208/arm7.nn</div></div>
<div style="position:absolute;left:-781.00px;width:1400px;text-align:right;top:1352.05px;font-size:14.7px;line-height:14.7px;color:#343741;font-family:'Liberation Sans', sans-serif;white-space:pre;">1</div>
<div style="position:absolute;left:17px;top:1160px;width:611px;height:1px;box-sizing:border-box;background:#D3DAE6;"></div>
<div style="position:absolute;left:17px;top:1196px;width:611px;height:1px;box-sizing:border-box;background:#D3DAE6;"></div>
<div style="position:absolute;left:17px;top:1232px;width:611px;height:1px;box-sizing:border-box;background:#D3DAE6;"></div>
<div style="position:absolute;left:17px;top:1268px;width:611px;height:1px;box-sizing:border-box;background:#D3DAE6;"></div>
<div style="position:absolute;left:17px;top:1304px;width:611px;height:1px;box-sizing:border-box;background:#D3DAE6;"></div>
<div style="position:absolute;left:17px;top:1340px;width:611px;height:1px;box-sizing:border-box;background:#D3DAE6;"></div>
<div style="position:absolute;left:17px;top:1370px;width:611px;height:1px;box-sizing:border-box;background:#D3DAE6;"></div>
<div style="position:absolute;left:25.60px;top:1384.63px;font-size:12.6px;line-height:12.6px;color:#343741;font-family:'Liberation Sans', sans-serif;white-space:pre;">Rows per page: 10</div>
<svg style="position:absolute;left:140px;top:1388px;" width="11" height="7" viewBox="0 0 11 7"><path d="M1 1 L5.5 5.2 L10 1" fill="none" stroke="#343741" stroke-width="1.2"/></svg>
<svg style="position:absolute;left:541px;top:1385px;" width="8" height="13" viewBox="0 0 8 13"><path d="M6.8 0.8 L1 6.5 L6.8 12.2" fill="none" stroke="#A2ABBA" stroke-width="1.3"/></svg>
<div style="position:absolute;left:-132.00px;width:1400px;text-align:center;top:1383.35px;font-size:14.7px;line-height:14.7px;color:#0B64DD;font-family:'Liberation Sans', sans-serif;white-space:pre;font-weight:700;">1</div>
<div style="position:absolute;left:564px;top:1396.6px;width:8px;height:1.6000000000001364px;box-sizing:border-box;background:#0B64DD;"></div>
<div style="position:absolute;left:-108.30px;width:1400px;text-align:center;top:1383.35px;font-size:14.7px;line-height:14.7px;color:#343741;font-family:'Liberation Sans', sans-serif;white-space:pre;">2</div>
<svg style="position:absolute;left:611.5px;top:1385px;" width="8" height="13" viewBox="0 0 8 13"><path d="M1.2 0.8 L7 6.5 L1.2 12.2" fill="none" stroke="#343741" stroke-width="1.3"/></svg>
<div style="position:absolute;left:654px;top:1093px;width:611px;height:1px;box-sizing:border-box;background:#D3DAE6;"></div>
<div style="position:absolute;left:660.20px;top:1102.39px;font-size:14.3px;line-height:14.3px;color:#343741;font-family:'Liberation Sans', sans-serif;white-space:pre;font-weight:700;">IP Address</div>
<div style="position:absolute;left:-146.50px;width:1400px;text-align:right;top:1102.39px;font-size:14.3px;line-height:14.3px;color:#343741;font-family:'Liberation Sans', sans-serif;white-space:pre;font-weight:700;">Count</div>
<div style="position:absolute;left:654px;top:1123px;width:611px;height:2px;box-sizing:border-box;background:#343741;"></div>
<div style="position:absolute;left:654px;top:1125px;width:304.5px;height:35px;overflow:hidden;"><div style="position:absolute;left:7.5px;top:11.05px;font-size:14.7px;line-height:14.7px;color:#0061A6;font-family:'Liberation Sans', sans-serif;white-space:pre;-webkit-text-stroke:0.2px #0061A6;">1.6.224.122</div></div>
<div style="position:absolute;left:-144.00px;width:1400px;text-align:right;top:1136.05px;font-size:14.7px;line-height:14.7px;color:#343741;font-family:'Liberation Sans', sans-serif;white-space:pre;">1</div>
<div style="position:absolute;left:654px;top:1161px;width:304.5px;height:35px;overflow:hidden;"><div style="position:absolute;left:7.5px;top:11.05px;font-size:14.7px;line-height:14.7px;color:#0061A6;font-family:'Liberation Sans', sans-serif;white-space:pre;-webkit-text-stroke:0.2px #0061A6;">1.20.91.18</div></div>
<div style="position:absolute;left:-144.00px;width:1400px;text-align:right;top:1172.05px;font-size:14.7px;line-height:14.7px;color:#343741;font-family:'Liberation Sans', sans-serif;white-space:pre;">1</div>
<div style="position:absolute;left:654px;top:1197px;width:304.5px;height:35px;overflow:hidden;"><div style="position:absolute;left:7.5px;top:11.05px;font-size:14.7px;line-height:14.7px;color:#0061A6;font-family:'Liberation Sans', sans-serif;white-space:pre;-webkit-text-stroke:0.2px #0061A6;">1.20.150.4</div></div>
<div style="position:absolute;left:-144.00px;width:1400px;text-align:right;top:1208.05px;font-size:14.7px;line-height:14.7px;color:#343741;font-family:'Liberation Sans', sans-serif;white-space:pre;">1</div>
<div style="position:absolute;left:654px;top:1233px;width:304.5px;height:35px;overflow:hidden;"><div style="position:absolute;left:7.5px;top:11.05px;font-size:14.7px;line-height:14.7px;color:#0061A6;font-family:'Liberation Sans', sans-serif;white-space:pre;-webkit-text-stroke:0.2px #0061A6;">1.33.51.100</div></div>
<div style="position:absolute;left:-144.00px;width:1400px;text-align:right;top:1244.05px;font-size:14.7px;line-height:14.7px;color:#343741;font-family:'Liberation Sans', sans-serif;white-space:pre;">1</div>
<div style="position:absolute;left:654px;top:1269px;width:304.5px;height:35px;overflow:hidden;"><div style="position:absolute;left:7.5px;top:11.05px;font-size:14.7px;line-height:14.7px;color:#0061A6;font-family:'Liberation Sans', sans-serif;white-space:pre;-webkit-text-stroke:0.2px #0061A6;">1.34.85.243</div></div>
<div style="position:absolute;left:-144.00px;width:1400px;text-align:right;top:1280.05px;font-size:14.7px;line-height:14.7px;color:#343741;font-family:'Liberation Sans', sans-serif;white-space:pre;">1</div>
<div style="position:absolute;left:654px;top:1305px;width:304.5px;height:35px;overflow:hidden;"><div style="position:absolute;left:7.5px;top:11.05px;font-size:14.7px;line-height:14.7px;color:#0061A6;font-family:'Liberation Sans', sans-serif;white-space:pre;-webkit-text-stroke:0.2px #0061A6;">1.53.218.181</div></div>
<div style="position:absolute;left:-144.00px;width:1400px;text-align:right;top:1316.05px;font-size:14.7px;line-height:14.7px;color:#343741;font-family:'Liberation Sans', sans-serif;white-space:pre;">1</div>
<div style="position:absolute;left:654px;top:1341px;width:304.5px;height:35px;overflow:hidden;"><div style="position:absolute;left:7.5px;top:11.05px;font-size:14.7px;line-height:14.7px;color:#0061A6;font-family:'Liberation Sans', sans-serif;white-space:pre;-webkit-text-stroke:0.2px #0061A6;">1.54.199.43</div></div>
<div style="position:absolute;left:-144.00px;width:1400px;text-align:right;top:1352.05px;font-size:14.7px;line-height:14.7px;color:#343741;font-family:'Liberation Sans', sans-serif;white-space:pre;">1</div>
<div style="position:absolute;left:654px;top:1160px;width:611px;height:1px;box-sizing:border-box;background:#D3DAE6;"></div>
<div style="position:absolute;left:654px;top:1196px;width:611px;height:1px;box-sizing:border-box;background:#D3DAE6;"></div>
<div style="position:absolute;left:654px;top:1232px;width:611px;height:1px;box-sizing:border-box;background:#D3DAE6;"></div>
<div style="position:absolute;left:654px;top:1268px;width:611px;height:1px;box-sizing:border-box;background:#D3DAE6;"></div>
<div style="position:absolute;left:654px;top:1304px;width:611px;height:1px;box-sizing:border-box;background:#D3DAE6;"></div>
<div style="position:absolute;left:654px;top:1340px;width:611px;height:1px;box-sizing:border-box;background:#D3DAE6;"></div>
<div style="position:absolute;left:654px;top:1370px;width:611px;height:1px;box-sizing:border-box;background:#D3DAE6;"></div>
<div style="position:absolute;left:662.60px;top:1384.63px;font-size:12.6px;line-height:12.6px;color:#343741;font-family:'Liberation Sans', sans-serif;white-space:pre;">Rows per page: 10</div>
<svg style="position:absolute;left:777px;top:1388px;" width="11" height="7" viewBox="0 0 11 7"><path d="M1 1 L5.5 5.2 L10 1" fill="none" stroke="#343741" stroke-width="1.2"/></svg>
<svg style="position:absolute;left:1178px;top:1385px;" width="8" height="13" viewBox="0 0 8 13"><path d="M6.8 0.8 L1 6.5 L6.8 12.2" fill="none" stroke="#A2ABBA" stroke-width="1.3"/></svg>
<div style="position:absolute;left:505.00px;width:1400px;text-align:center;top:1383.35px;font-size:14.7px;line-height:14.7px;color:#0B64DD;font-family:'Liberation Sans', sans-serif;white-space:pre;font-weight:700;">1</div>
<div style="position:absolute;left:1201px;top:1396.6px;width:8px;height:1.6000000000001364px;box-sizing:border-box;background:#0B64DD;"></div>
<div style="position:absolute;left:528.70px;width:1400px;text-align:center;top:1383.35px;font-size:14.7px;line-height:14.7px;color:#343741;font-family:'Liberation Sans', sans-serif;white-space:pre;">2</div>
<svg style="position:absolute;left:1248.5px;top:1385px;" width="8" height="13" viewBox="0 0 8 13"><path d="M1.2 0.8 L7 6.5 L1.2 12.2" fill="none" stroke="#343741" stroke-width="1.3"/></svg>
<div style="position:absolute;left:1292px;top:1093px;width:611px;height:1px;box-sizing:border-box;background:#D3DAE6;"></div>
<div style="position:absolute;left:1298.20px;top:1102.39px;font-size:14.3px;line-height:14.3px;color:#343741;font-family:'Liberation Sans', sans-serif;white-space:pre;font-weight:700;">Hash</div>
<div style="position:absolute;left:491.50px;width:1400px;text-align:right;top:1102.39px;font-size:14.3px;line-height:14.3px;color:#343741;font-family:'Liberation Sans', sans-serif;white-space:pre;font-weight:700;">Count</div>
<div style="position:absolute;left:1292px;top:1123px;width:611px;height:2px;box-sizing:border-box;background:#343741;"></div>
<div style="position:absolute;left:1292px;top:1125px;width:304.5px;height:35px;overflow:hidden;"><div style="position:absolute;left:7.5px;top:11.05px;font-size:14.7px;line-height:14.7px;color:#0061A6;font-family:'Liberation Sans', sans-serif;white-space:pre;-webkit-text-stroke:0.2px #0061A6;">192e98eee1967526ed624b240bc166611370c8a1</div></div>
<div style="position:absolute;left:494.00px;width:1400px;text-align:right;top:1136.05px;font-size:14.7px;line-height:14.7px;color:#343741;font-family:'Liberation Sans', sans-serif;white-space:pre;">1</div>
<div style="position:absolute;left:1292px;top:1161px;width:304.5px;height:35px;overflow:hidden;"><div style="position:absolute;left:7.5px;top:11.05px;font-size:14.7px;line-height:14.7px;color:#0061A6;font-family:'Liberation Sans', sans-serif;white-space:pre;-webkit-text-stroke:0.2px #0061A6;">1a045520e27d2da9a3f4e8e23f19915d22eb2c4f</div></div>
<div style="position:absolute;left:494.00px;width:1400px;text-align:right;top:1172.05px;font-size:14.7px;line-height:14.7px;color:#343741;font-family:'Liberation Sans', sans-serif;white-space:pre;">1</div>
<div style="position:absolute;left:1292px;top:1197px;width:304.5px;height:35px;overflow:hidden;"><div style="position:absolute;left:7.5px;top:11.05px;font-size:14.7px;line-height:14.7px;color:#0061A6;font-family:'Liberation Sans', sans-serif;white-space:pre;-webkit-text-stroke:0.2px #0061A6;">20b43cc27ff6635cc0fd415ef1e3c9f53a7db6e2</div></div>
<div style="position:absolute;left:494.00px;width:1400px;text-align:right;top:1208.05px;font-size:14.7px;line-height:14.7px;color:#343741;font-family:'Liberation Sans', sans-serif;white-space:pre;">1</div>
<div style="position:absolute;left:1292px;top:1233px;width:304.5px;height:35px;overflow:hidden;"><div style="position:absolute;left:7.5px;top:11.05px;font-size:14.7px;line-height:14.7px;color:#0061A6;font-family:'Liberation Sans', sans-serif;white-space:pre;-webkit-text-stroke:0.2px #0061A6;">327b2ccc22ecc9ade5dfe119ac4b5bf75a9f93d</div></div>
<div style="position:absolute;left:494.00px;width:1400px;text-align:right;top:1244.05px;font-size:14.7px;line-height:14.7px;color:#343741;font-family:'Liberation Sans', sans-serif;white-space:pre;">1</div>
<div style="position:absolute;left:1292px;top:1269px;width:304.5px;height:35px;overflow:hidden;"><div style="position:absolute;left:7.5px;top:11.05px;font-size:14.7px;line-height:14.7px;color:#0061A6;font-family:'Liberation Sans', sans-serif;white-space:pre;-webkit-text-stroke:0.2px #0061A6;">4293c1d8574dc87c58360d6bac3daa182f64a7b</div></div>
<div style="position:absolute;left:494.00px;width:1400px;text-align:right;top:1280.05px;font-size:14.7px;line-height:14.7px;color:#343741;font-family:'Liberation Sans', sans-serif;white-space:pre;">1</div>
<div style="position:absolute;left:1292px;top:1305px;width:304.5px;height:35px;overflow:hidden;"><div style="position:absolute;left:7.5px;top:11.05px;font-size:14.7px;line-height:14.7px;color:#0061A6;font-family:'Liberation Sans', sans-serif;white-space:pre;-webkit-text-stroke:0.2px #0061A6;">43fb9dfc6de9d640246dda9b5c2d2ed289164ca</div></div>
<div style="position:absolute;left:494.00px;width:1400px;text-align:right;top:1316.05px;font-size:14.7px;line-height:14.7px;color:#343741;font-family:'Liberation Sans', sans-serif;white-space:pre;">1</div>
<div style="position:absolute;left:1292px;top:1341px;width:304.5px;height:35px;overflow:hidden;"><div style="position:absolute;left:7.5px;top:11.05px;font-size:14.7px;line-height:14.7px;color:#0061A6;font-family:'Liberation Sans', sans-serif;white-space:pre;-webkit-text-stroke:0.2px #0061A6;">465505246aaeb2e2e40f9497a6c0a765a7df1b9</div></div>
<div style="position:absolute;left:494.00px;width:1400px;text-align:right;top:1352.05px;font-size:14.7px;line-height:14.7px;color:#343741;font-family:'Liberation Sans', sans-serif;white-space:pre;">1</div>
<div style="position:absolute;left:1292px;top:1160px;width:611px;height:1px;box-sizing:border-box;background:#D3DAE6;"></div>
<div style="position:absolute;left:1292px;top:1196px;width:611px;height:1px;box-sizing:border-box;background:#D3DAE6;"></div>
<div style="position:absolute;left:1292px;top:1232px;width:611px;height:1px;box-sizing:border-box;background:#D3DAE6;"></div>
<div style="position:absolute;left:1292px;top:1268px;width:611px;height:1px;box-sizing:border-box;background:#D3DAE6;"></div>
<div style="position:absolute;left:1292px;top:1304px;width:611px;height:1px;box-sizing:border-box;background:#D3DAE6;"></div>
<div style="position:absolute;left:1292px;top:1340px;width:611px;height:1px;box-sizing:border-box;background:#D3DAE6;"></div>
<div style="position:absolute;left:1292px;top:1370px;width:611px;height:1px;box-sizing:border-box;background:#D3DAE6;"></div>
<div style="position:absolute;left:1300.60px;top:1384.63px;font-size:12.6px;line-height:12.6px;color:#343741;font-family:'Liberation Sans', sans-serif;white-space:pre;">Rows per page: 10</div>
<svg style="position:absolute;left:1415px;top:1388px;" width="11" height="7" viewBox="0 0 11 7"><path d="M1 1 L5.5 5.2 L10 1" fill="none" stroke="#343741" stroke-width="1.2"/></svg>
<svg style="position:absolute;left:1816px;top:1385px;" width="8" height="13" viewBox="0 0 8 13"><path d="M6.8 0.8 L1 6.5 L6.8 12.2" fill="none" stroke="#A2ABBA" stroke-width="1.3"/></svg>
<div style="position:absolute;left:1143.00px;width:1400px;text-align:center;top:1383.35px;font-size:14.7px;line-height:14.7px;color:#0B64DD;font-family:'Liberation Sans', sans-serif;white-space:pre;font-weight:700;">1</div>
<div style="position:absolute;left:1839px;top:1396.6px;width:8px;height:1.6000000000001364px;box-sizing:border-box;background:#0B64DD;"></div>
<div style="position:absolute;left:1166.70px;width:1400px;text-align:center;top:1383.35px;font-size:14.7px;line-height:14.7px;color:#343741;font-family:'Liberation Sans', sans-serif;white-space:pre;">2</div>
<svg style="position:absolute;left:1886.5px;top:1385px;" width="8" height="13" viewBox="0 0 8 13"><path d="M1.2 0.8 L7 6.5 L1.2 12.2" fill="none" stroke="#343741" stroke-width="1.3"/></svg>
<div style="position:absolute;left:17.4px;top:1464.73px;font-size:15.2px;line-height:15.2px;color:#343741;font-family:'Liberation Sans', sans-serif;white-space:pre;"><b>6,793</b> documents</div>
<div style="position:absolute;left:1582px;top:1457px;width:116px;height:32px;box-sizing:border-box;background:#FFFFFF;border:1px solid #D3DAE6;border-radius:4px;"></div>
<svg style="position:absolute;left:1590px;top:1465px;overflow:visible;" width="17" height="16" viewBox="0 0 17 16"><rect x="0.7" y="0.7" width="15.6" height="14.6" rx="2" fill="none" stroke="#343741" stroke-width="1.2"/><path d="M0.7 4.5 H16.3" stroke="#343741" stroke-width="1.2"/><path d="M3 7.5 H5 M6.5 7.5 H10.5 M12 7.5 H14 M3 10 H5 M6.5 10 H10.5 M12 10 H14 M3 12.6 H5 M6.5 12.6 H10.5 M12 12.6 H14" stroke="#343741" stroke-width="1"/></svg>
<div style="position:absolute;left:1615.30px;top:1466.53px;font-size:12.6px;line-height:12.6px;color:#343741;font-family:'Liberation Sans', sans-serif;white-space:pre;">Columns</div>
<div style="position:absolute;left:1673px;top:1465px;width:16px;height:16px;box-sizing:border-box;background:#E0E5EE;border-radius:3px;"></div>
<div style="position:absolute;left:981.00px;width:1400px;text-align:center;top:1466.53px;font-size:12.6px;line-height:12.6px;color:#000000;font-family:'Liberation Sans', sans-serif;white-space:pre;font-weight:700;">5</div>
<div style="position:absolute;left:1706px;top:1457px;width:125px;height:32px;box-sizing:border-box;background:#FFFFFF;border:1px solid #D3DAE6;border-radius:4px;"></div>
<svg style="position:absolute;left:1716px;top:1465px;overflow:visible;" width="12" height="16" viewBox="0 0 12 16"><path d="M6 1 V15 M2.5 4.5 L6 1 L9.5 4.5 M2.5 11.5 L6 15 L9.5 11.5" fill="none" stroke="#343741" stroke-width="1.1"/></svg>
<div style="position:absolute;left:1739.40px;top:1466.02px;font-size:13.2px;line-height:13.2px;color:#343741;font-family:'Liberation Sans', sans-serif;white-space:pre;">Sort fields</div>
<div style="position:absolute;left:1806px;top:1465px;width:16px;height:16px;box-sizing:border-box;background:#E0E5EE;border-radius:3px;"></div>
<div style="position:absolute;left:1114.00px;width:1400px;text-align:center;top:1466.53px;font-size:12.6px;line-height:12.6px;color:#000000;font-family:'Liberation Sans', sans-serif;white-space:pre;font-weight:700;">1</div>
<div style="position:absolute;left:1839px;top:1457px;width:64px;height:32px;box-sizing:border-box;background:#FFFFFF;border:1px solid #D3DAE6;border-radius:4px;"></div>
<div style="position:absolute;left:1871px;top:1458px;width:1px;height:30px;box-sizing:border-box;background:#D3DAE6;"></div>
<svg style="position:absolute;left:1847px;top:1467px;overflow:visible;" width="17" height="12" viewBox="0 0 17 12"><rect x="0.6" y="0.6" width="15.8" height="10.8" rx="1" fill="none" stroke="#343741" stroke-width="1.2"/><path d="M3 3.5 H14 M3 5.8 H14 M3 8.2 H11" stroke="#343741" stroke-width="1.2" stroke-dasharray="1.2 0.9"/><rect x="11.8" y="7.2" width="2.4" height="2" fill="#343741"/></svg>
<svg style="position:absolute;left:1880px;top:1466px;overflow:visible;" width="15" height="14" viewBox="0 0 15 14"><path d="M0.5 4 H14.5 M0.5 10 H14.5" stroke="#343741" stroke-width="1.1"/><circle cx="5" cy="4" r="2.2" fill="#fff" stroke="#343741" stroke-width="1.1"/><circle cx="10" cy="10" r="2.2" fill="#fff" stroke="#343741" stroke-width="1.1"/></svg>
<div style="position:absolute;left:67.00px;top:1503.42px;font-size:12.5px;line-height:12.5px;color:#343741;font-family:'Liberation Sans', sans-serif;white-space:pre;font-weight:700;">@timestamp</div>
<svg style="position:absolute;left:146px;top:1502px;overflow:visible;" width="13" height="13" viewBox="0 0 13 13"><circle cx="6.5" cy="6.5" r="5.8" fill="none" stroke="#343741" stroke-width="1.1"/><path d="M6.5 3 V6.8 H9.6" fill="none" stroke="#343741" stroke-width="1.1"/></svg>
<svg style="position:absolute;left:245px;top:1502px;overflow:visible;" width="11" height="13" viewBox="0 0 11 13"><path d="M5.5 0.5 V12 M1 7.5 L5.5 12 L10 7.5" fill="none" stroke="#343741" stroke-width="1.2"/></svg>
<div style="position:absolute;left:279.4px;top:1501px;width:15px;height:15.5px;box-sizing:border-box;background:#E6F1FA;border:1px solid #C9DDF0;border-radius:3px;"></div>
<div style="position:absolute;left:-413.10px;width:1400px;text-align:center;top:1502.86px;font-size:11.5px;line-height:11.5px;color:#3F6A93;font-family:'Liberation Sans', sans-serif;white-space:pre;font-weight:700;font-style:italic;">k</div>
<div style="position:absolute;left:299.40px;top:1503.42px;font-size:12.5px;line-height:12.5px;color:#343741;font-family:'Liberation Sans', sans-serif;white-space:pre;font-weight:700;">threat.ind</div>
<div style="position:absolute;left:279.00px;top:1518.72px;font-size:12.5px;line-height:12.5px;color:#343741;font-family:'Liberation Sans', sans-serif;white-space:pre;font-weight:700;">icator.name</div>
<div style="position:absolute;left:379.7px;top:1501px;width:15px;height:15.5px;box-sizing:border-box;background:#E6F1FA;border:1px solid #C9DDF0;border-radius:3px;"></div>
<div style="position:absolute;left:-312.80px;width:1400px;text-align:center;top:1502.86px;font-size:11.5px;line-height:11.5px;color:#3F6A93;font-family:'Liberation Sans', sans-serif;white-space:pre;font-weight:700;font-style:italic;">k</div>
<div style="position:absolute;left:399.20px;top:1503.42px;font-size:12.5px;line-height:12.5px;color:#343741;font-family:'Liberation Sans', sans-serif;white-space:pre;font-weight:700;">threat.ind</div>
<div style="position:absolute;left:379.70px;top:1518.72px;font-size:12.5px;line-height:12.5px;color:#343741;font-family:'Liberation Sans', sans-serif;white-space:pre;font-weight:700;">icator.confid</div>
<div style="position:absolute;left:379.70px;top:1534.62px;font-size:12.5px;line-height:12.5px;color:#343741;font-family:'Liberation Sans', sans-serif;white-space:pre;font-weight:700;">ence</div>
<div style="position:absolute;left:479.2px;top:1501.5px;width:15.3px;height:15.4px;box-sizing:border-box;background:#F8EFE0;border:1px solid #E8D9BE;border-radius:3px;"></div>
<svg style="position:absolute;left:482px;top:1504.5px;overflow:visible;" width="10" height="10" viewBox="0 0 10 10"><rect x="0.5" y="1" width="9" height="8.5" rx="1" fill="none" stroke="#7D6A45" stroke-width="0.9"/><path d="M0.5 3.3 H9.5" stroke="#7D6A45" stroke-width="0.9"/><path d="M2.5 5.3 H3.5 M4.5 5.3 H5.5 M6.5 5.3 H7.5 M2.5 7.3 H3.5 M4.5 7.3 H5.5 M6.5 7.3 H7.5" stroke="#7D6A45" stroke-width="0.9"/></svg>
<div style="position:absolute;left:499.40px;top:1503.42px;font-size:12.5px;line-height:12.5px;color:#343741;font-family:'Liberation Sans', sans-serif;white-space:pre;font-weight:700;">threat.indicator.first_seen</div>
<div style="position:absolute;left:812px;top:1501px;width:15px;height:15.5px;box-sizing:border-box;background:#E6F1FA;border:1px solid #C9DDF0;border-radius:3px;"></div>
<div style="position:absolute;left:119.50px;width:1400px;text-align:center;top:1502.86px;font-size:11.5px;line-height:11.5px;color:#3F6A93;font-family:'Liberation Sans', sans-serif;white-space:pre;font-weight:700;font-style:italic;">k</div>
<div style="position:absolute;left:831.60px;top:1503.42px;font-size:12.5px;line-height:12.5px;color:#343741;font-family:'Liberation Sans', sans-serif;white-space:pre;font-weight:700;">event.original</div>
<div style="position:absolute;left:8px;top:1557px;width:1904px;height:1px;box-sizing:border-box;background:#D3DAE6;"></div>
<div style="position:absolute;left:9px;top:1558px;width:1902px;height:407px;overflow:hidden;"><div style="position:absolute;left:0;top:0px;width:1903px;height:64px;background:#FFFFFF;box-sizing:border-box;border-bottom:1px solid #D3DAE6;"></div><svg style="position:absolute;left:7px;top:9.6px;" width="12" height="12" viewBox="0 0 12 12"><path d="M1.2 10.8 L10.8 1.2 M7.2 1.2 H10.8 V4.8 M1.2 7.2 V10.8 H4.8" fill="none" stroke="#535966" stroke-width="0.9"/></svg><div style="position:absolute;left:30.200000000000003px;top:8.3px;width:16px;height:16px;box-sizing:border-box;border:1px solid #939AA5;border-radius:4px;background:#fff;"></div><div style="position:absolute;left:58.0px;top:12.01px;font-size:12px;line-height:12px;color:#343741;font-family:'Liberation Mono', monospace;white-space:pre;-webkit-text-stroke:0.15px #343741;">Sep 11, 2024 @ 18:53:36.015</div><div style="position:absolute;left:270.0px;top:12.01px;font-size:12px;line-height:12px;color:#343741;font-family:'Liberation Mono', monospace;white-space:pre;-webkit-text-stroke:0.15px #343741;">Malicious</div><div style="position:absolute;left:270.0px;top:28.91px;font-size:12px;line-height:12px;color:#343741;font-family:'Liberation Mono', monospace;white-space:pre;-webkit-text-stroke:0.15px #343741;">domain Name</div><div style="position:absolute;left:370.5px;top:12.01px;font-size:12px;line-height:12px;color:#343741;font-family:'Liberation Mono', monospace;white-space:pre;-webkit-text-stroke:0.15px #343741;">Medium</div><div style="position:absolute;left:470.2px;top:12.01px;font-size:12px;line-height:12px;color:#343741;font-family:'Liberation Mono', monospace;white-space:pre;-webkit-text-stroke:0.15px #343741;">Sep 4, 2024 @ 06:18:21.587</div><div style="position:absolute;left:802.2px;top:12.01px;font-size:12px;line-height:12px;color:#343741;font-family:'Liberation Mono', monospace;white-space:pre;-webkit-text-stroke:0.15px #343741;">{"confidence":50,"created":"2024-09-11T16:53:36.015107Z","description":"nan","external_references":[{"source_name":"Forescout Vedere</div><div style="position:absolute;left:802.2px;top:28.91px;font-size:12px;line-height:12px;color:#343741;font-family:'Liberation Mono', monospace;white-space:pre;-webkit-text-stroke:0.15px #343741;">Labs","url":"https://www.forescout.com/research-labs/"}],"id":"indicator--3b580db7-a398-488f-a9db-c50d8ab23156","labels":["malicious-</div><div style="position:absolute;left:802.2px;top:40px;width:1000px;height:14.80px;overflow:hidden;"><div style="position:absolute;left:0;top:5.81px;font-size:12px;line-height:12px;color:#343741;font-family:'Liberation Mono', monospace;white-space:pre;-webkit-text-stroke:0.15px #343741;">activity"],"modified":"2024-09-11T16:53:36.015107Z","name":"Malicious domain Name","pattern":"[domain-name:value = …</div></div><div style="position:absolute;left:0;top:64px;width:1903px;height:64px;background:#F5F7FA;box-sizing:border-box;border-bottom:1px solid #D3DAE6;"></div><svg style="position:absolute;left:7px;top:73.6px;" width="12" height="12" viewBox="0 0 12 12"><path d="M1.2 10.8 L10.8 1.2 M7.2 1.2 H10.8 V4.8 M1.2 7.2 V10.8 H4.8" fill="none" stroke="#535966" stroke-width="0.9"/></svg><div style="position:absolute;left:30.200000000000003px;top:72.3px;width:16px;height:16px;box-sizing:border-box;border:1px solid #939AA5;border-radius:4px;background:#fff;"></div><div style="position:absolute;left:58.0px;top:76.01px;font-size:12px;line-height:12px;color:#343741;font-family:'Liberation Mono', monospace;white-space:pre;-webkit-text-stroke:0.15px #343741;">Sep 11, 2024 @ 18:53:36.014</div><div style="position:absolute;left:270.0px;top:76.01px;font-size:12px;line-height:12px;color:#343741;font-family:'Liberation Mono', monospace;white-space:pre;-webkit-text-stroke:0.15px #343741;">Malicious</div><div style="position:absolute;left:270.0px;top:92.91px;font-size:12px;line-height:12px;color:#343741;font-family:'Liberation Mono', monospace;white-space:pre;-webkit-text-stroke:0.15px #343741;">URL</div><div style="position:absolute;left:370.5px;top:76.01px;font-size:12px;line-height:12px;color:#343741;font-family:'Liberation Mono', monospace;white-space:pre;-webkit-text-stroke:0.15px #343741;">Medium</div><div style="position:absolute;left:470.2px;top:76.01px;font-size:12px;line-height:12px;color:#343741;font-family:'Liberation Mono', monospace;white-space:pre;-webkit-text-stroke:0.15px #343741;">Sep 4, 2024 @ 06:18:21.587</div><div style="position:absolute;left:802.2px;top:76.01px;font-size:12px;line-height:12px;color:#343741;font-family:'Liberation Mono', monospace;white-space:pre;-webkit-text-stroke:0.15px #343741;">{"confidence":50,"created":"2024-09-11T16:53:36.014286Z","description":"nan","external_references":[{"source_name":"Forescout Vedere</div><div style="position:absolute;left:802.2px;top:92.91px;font-size:12px;line-height:12px;color:#343741;font-family:'Liberation Mono', monospace;white-space:pre;-webkit-text-stroke:0.15px #343741;">Labs","url":"https://www.forescout.com/research-labs/"}],"id":"indicator--7c807a62-f2bc-4528-b7f8-d4972753d957","labels":["malicious-</div><div style="position:absolute;left:802.2px;top:104px;width:1000px;height:14.80px;overflow:hidden;"><div style="position:absolute;left:0;top:5.81px;font-size:12px;line-height:12px;color:#343741;font-family:'Liberation Mono', monospace;white-space:pre;-webkit-text-stroke:0.15px #343741;">activity"],"modified":"2024-09-11T16:53:36.014286Z","name":"Malicious URL","pattern":"[url:value = …</div></div><div style="position:absolute;left:0;top:128px;width:1903px;height:64px;background:#FFFFFF;box-sizing:border-box;border-bottom:1px solid #D3DAE6;"></div><svg style="position:absolute;left:7px;top:137.6px;" width="12" height="12" viewBox="0 0 12 12"><path d="M1.2 10.8 L10.8 1.2 M7.2 1.2 H10.8 V4.8 M1.2 7.2 V10.8 H4.8" fill="none" stroke="#535966" stroke-width="0.9"/></svg><div style="position:absolute;left:30.200000000000003px;top:136.3px;width:16px;height:16px;box-sizing:border-box;border:1px solid #939AA5;border-radius:4px;background:#fff;"></div><div style="position:absolute;left:58.0px;top:140.01px;font-size:12px;line-height:12px;color:#343741;font-family:'Liberation Mono', monospace;white-space:pre;-webkit-text-stroke:0.15px #343741;">Sep 11, 2024 @ 18:53:36.013</div><div style="position:absolute;left:270.0px;top:140.01px;font-size:12px;line-height:12px;color:#343741;font-family:'Liberation Mono', monospace;white-space:pre;-webkit-text-stroke:0.15px #343741;">Malicious</div><div style="position:absolute;left:270.0px;top:156.91px;font-size:12px;line-height:12px;color:#343741;font-family:'Liberation Mono', monospace;white-space:pre;-webkit-text-stroke:0.15px #343741;">URL</div><div style="position:absolute;left:370.5px;top:140.01px;font-size:12px;line-height:12px;color:#343741;font-family:'Liberation Mono', monospace;white-space:pre;-webkit-text-stroke:0.15px #343741;">Medium</div><div style="position:absolute;left:470.2px;top:140.01px;font-size:12px;line-height:12px;color:#343741;font-family:'Liberation Mono', monospace;white-space:pre;-webkit-text-stroke:0.15px #343741;">Sep 4, 2024 @ 06:18:21.587</div><div style="position:absolute;left:802.2px;top:140.01px;font-size:12px;line-height:12px;color:#343741;font-family:'Liberation Mono', monospace;white-space:pre;-webkit-text-stroke:0.15px #343741;">{"confidence":50,"created":"2024-09-11T16:53:36.013441Z","description":"nan","external_references":[{"source_name":"Forescout Vedere</div><div style="position:absolute;left:802.2px;top:156.91px;font-size:12px;line-height:12px;color:#343741;font-family:'Liberation Mono', monospace;white-space:pre;-webkit-text-stroke:0.15px #343741;">Labs","url":"https://www.forescout.com/research-labs/"}],"id":"indicator--1e55adbc-89ca-4c8f-80c9-4643510c0679","labels":["malicious-</div><div style="position:absolute;left:802.2px;top:168px;width:1000px;height:14.80px;overflow:hidden;"><div style="position:absolute;left:0;top:5.81px;font-size:12px;line-height:12px;color:#343741;font-family:'Liberation Mono', monospace;white-space:pre;-webkit-text-stroke:0.15px #343741;">activity"],"modified":"2024-09-11T16:53:36.013441Z","name":"Malicious URL","pattern":"[url:value = …</div></div><div style="position:absolute;left:0;top:192px;width:1903px;height:63px;background:#F5F7FA;box-sizing:border-box;border-bottom:1px solid #D3DAE6;"></div><svg style="position:absolute;left:7px;top:201.6px;" width="12" height="12" viewBox="0 0 12 12"><path d="M1.2 10.8 L10.8 1.2 M7.2 1.2 H10.8 V4.8 M1.2 7.2 V10.8 H4.8" fill="none" stroke="#535966" stroke-width="0.9"/></svg><div style="position:absolute;left:30.200000000000003px;top:200.3px;width:16px;height:16px;box-sizing:border-box;border:1px solid #939AA5;border-radius:4px;background:#fff;"></div><div style="position:absolute;left:58.0px;top:204.01px;font-size:12px;line-height:12px;color:#343741;font-family:'Liberation Mono', monospace;white-space:pre;-webkit-text-stroke:0.15px #343741;">Sep 11, 2024 @ 18:53:36.012</div><div style="position:absolute;left:270.0px;top:204.01px;font-size:12px;line-height:12px;color:#343741;font-family:'Liberation Mono', monospace;white-space:pre;-webkit-text-stroke:0.15px #343741;">Malicious</div><div style="position:absolute;left:270.0px;top:220.91px;font-size:12px;line-height:12px;color:#343741;font-family:'Liberation Mono', monospace;white-space:pre;-webkit-text-stroke:0.15px #343741;">URL</div><div style="position:absolute;left:370.5px;top:204.01px;font-size:12px;line-height:12px;color:#343741;font-family:'Liberation Mono', monospace;white-space:pre;-webkit-text-stroke:0.15px #343741;">Medium</div><div style="position:absolute;left:470.2px;top:204.01px;font-size:12px;line-height:12px;color:#343741;font-family:'Liberation Mono', monospace;white-space:pre;-webkit-text-stroke:0.15px #343741;">Sep 4, 2024 @ 06:18:21.587</div><div style="position:absolute;left:802.2px;top:204.01px;font-size:12px;line-height:12px;color:#343741;font-family:'Liberation Mono', monospace;white-space:pre;-webkit-text-stroke:0.15px #343741;">{"confidence":50,"created":"2024-09-11T16:53:36.012533Z","description":"nan","external_references":[{"source_name":"Forescout Vedere</div><div style="position:absolute;left:802.2px;top:220.91px;font-size:12px;line-height:12px;color:#343741;font-family:'Liberation Mono', monospace;white-space:pre;-webkit-text-stroke:0.15px #343741;">Labs","url":"https://www.forescout.com/research-labs/"}],"id":"indicator--32ef8398-e893-48be-8930-e227e71db878","labels":["malicious-</div><div style="position:absolute;left:802.2px;top:232px;width:1000px;height:14.80px;overflow:hidden;"><div style="position:absolute;left:0;top:5.81px;font-size:12px;line-height:12px;color:#343741;font-family:'Liberation Mono', monospace;white-space:pre;-webkit-text-stroke:0.15px #343741;">activity"],"modified":"2024-09-11T16:53:36.012533Z","name":"Malicious URL","pattern":"[url:value = …</div></div><div style="position:absolute;left:0;top:255px;width:1903px;height:64px;background:#FFFFFF;box-sizing:border-box;border-bottom:1px solid #D3DAE6;"></div><svg style="position:absolute;left:7px;top:264.6px;" width="12" height="12" viewBox="0 0 12 12"><path d="M1.2 10.8 L10.8 1.2 M7.2 1.2 H10.8 V4.8 M1.2 7.2 V10.8 H4.8" fill="none" stroke="#535966" stroke-width="0.9"/></svg><div style="position:absolute;left:30.200000000000003px;top:263.3px;width:16px;height:16px;box-sizing:border-box;border:1px solid #939AA5;border-radius:4px;background:#fff;"></div><div style="position:absolute;left:58.0px;top:267.01px;font-size:12px;line-height:12px;color:#343741;font-family:'Liberation Mono', monospace;white-space:pre;-webkit-text-stroke:0.15px #343741;">Sep 11, 2024 @ 18:53:36.011</div><div style="position:absolute;left:270.0px;top:267.01px;font-size:12px;line-height:12px;color:#343741;font-family:'Liberation Mono', monospace;white-space:pre;-webkit-text-stroke:0.15px #343741;">Malicious</div><div style="position:absolute;left:270.0px;top:283.91px;font-size:12px;line-height:12px;color:#343741;font-family:'Liberation Mono', monospace;white-space:pre;-webkit-text-stroke:0.15px #343741;">URL</div><div style="position:absolute;left:370.5px;top:267.01px;font-size:12px;line-height:12px;color:#343741;font-family:'Liberation Mono', monospace;white-space:pre;-webkit-text-stroke:0.15px #343741;">Medium</div><div style="position:absolute;left:470.2px;top:267.01px;font-size:12px;line-height:12px;color:#343741;font-family:'Liberation Mono', monospace;white-space:pre;-webkit-text-stroke:0.15px #343741;">Sep 4, 2024 @ 06:18:21.587</div><div style="position:absolute;left:802.2px;top:267.01px;font-size:12px;line-height:12px;color:#343741;font-family:'Liberation Mono', monospace;white-space:pre;-webkit-text-stroke:0.15px #343741;">{"confidence":50,"created":"2024-09-11T16:53:36.011654Z","description":"nan","external_references":[{"source_name":"Forescout Vedere</div><div style="position:absolute;left:802.2px;top:283.91px;font-size:12px;line-height:12px;color:#343741;font-family:'Liberation Mono', monospace;white-space:pre;-webkit-text-stroke:0.15px #343741;">Labs","url":"https://www.forescout.com/research-labs/"}],"id":"indicator--ce6d1a55-4cdf-40b7-9a0e-884c1c6fbdbd","labels":["malicious-</div><div style="position:absolute;left:802.2px;top:295px;width:1000px;height:14.80px;overflow:hidden;"><div style="position:absolute;left:0;top:5.81px;font-size:12px;line-height:12px;color:#343741;font-family:'Liberation Mono', monospace;white-space:pre;-webkit-text-stroke:0.15px #343741;">activity"],"modified":"2024-09-11T16:53:36.011654Z","name":"Malicious URL","pattern":"[url:value = …</div></div><div style="position:absolute;left:0;top:319px;width:1903px;height:64px;background:#F5F7FA;box-sizing:border-box;border-bottom:1px solid #D3DAE6;"></div><svg style="position:absolute;left:7px;top:328.6px;" width="12" height="12" viewBox="0 0 12 12"><path d="M1.2 10.8 L10.8 1.2 M7.2 1.2 H10.8 V4.8 M1.2 7.2 V10.8 H4.8" fill="none" stroke="#535966" stroke-width="0.9"/></svg><div style="position:absolute;left:30.200000000000003px;top:327.3px;width:16px;height:16px;box-sizing:border-box;border:1px solid #939AA5;border-radius:4px;background:#fff;"></div><div style="position:absolute;left:58.0px;top:331.01px;font-size:12px;line-height:12px;color:#343741;font-family:'Liberation Mono', monospace;white-space:pre;-webkit-text-stroke:0.15px #343741;">Sep 11, 2024 @ 18:53:36.010</div><div style="position:absolute;left:270.0px;top:331.01px;font-size:12px;line-height:12px;color:#343741;font-family:'Liberation Mono', monospace;white-space:pre;-webkit-text-stroke:0.15px #343741;">Malicious</div><div style="position:absolute;left:270.0px;top:347.91px;font-size:12px;line-height:12px;color:#343741;font-family:'Liberation Mono', monospace;white-space:pre;-webkit-text-stroke:0.15px #343741;">URL</div><div style="position:absolute;left:370.5px;top:331.01px;font-size:12px;line-height:12px;color:#343741;font-family:'Liberation Mono', monospace;white-space:pre;-webkit-text-stroke:0.15px #343741;">Medium</div><div style="position:absolute;left:470.2px;top:331.01px;font-size:12px;line-height:12px;color:#343741;font-family:'Liberation Mono', monospace;white-space:pre;-webkit-text-stroke:0.15px #343741;">Sep 6, 2024 @ 17:40:04.980</div><div style="position:absolute;left:802.2px;top:331.01px;font-size:12px;line-height:12px;color:#343741;font-family:'Liberation Mono', monospace;white-space:pre;-webkit-text-stroke:0.15px #343741;">{"confidence":50,"created":"2024-09-11T16:53:36.01071Z","description":"nan","external_references":[{"source_name":"Forescout Vedere</div><div style="position:absolute;left:802.2px;top:347.91px;font-size:12px;line-height:12px;color:#343741;font-family:'Liberation Mono', monospace;white-space:pre;-webkit-text-stroke:0.15px #343741;">Labs","url":"https://www.forescout.com/research-labs/"}],"id":"indicator--6edd45b1-3e5f-42b5-84ff-6095f3a8351f","labels":["malicious-</div><div style="position:absolute;left:802.2px;top:359px;width:1000px;height:14.80px;overflow:hidden;"><div style="position:absolute;left:0;top:5.81px;font-size:12px;line-height:12px;color:#343741;font-family:'Liberation Mono', monospace;white-space:pre;-webkit-text-stroke:0.15px #343741;">activity"],"modified":"2024-09-11T16:53:36.01071Z","name":"Malicious URL","pattern":"[url:value = …</div></div><div style="position:absolute;left:0;top:383px;width:1903px;height:64px;background:#FFFFFF;box-sizing:border-box;border-bottom:1px solid #D3DAE6;"></div><svg style="position:absolute;left:7px;top:392.6px;" width="12" height="12" viewBox="0 0 12 12"><path d="M1.2 10.8 L10.8 1.2 M7.2 1.2 H10.8 V4.8 M1.2 7.2 V10.8 H4.8" fill="none" stroke="#535966" stroke-width="0.9"/></svg><div style="position:absolute;left:30.200000000000003px;top:391.3px;width:16px;height:16px;box-sizing:border-box;border:1px solid #939AA5;border-radius:4px;background:#fff;"></div><div style="position:absolute;left:58.0px;top:395.01px;font-size:12px;line-height:12px;color:#343741;font-family:'Liberation Mono', monospace;white-space:pre;-webkit-text-stroke:0.15px #343741;">Sep 11, 2024 @ 18:53:36.009</div><div style="position:absolute;left:270.0px;top:395.01px;font-size:12px;line-height:12px;color:#343741;font-family:'Liberation Mono', monospace;white-space:pre;-webkit-text-stroke:0.15px #343741;">Malicious</div><div style="position:absolute;left:270.0px;top:411.91px;font-size:12px;line-height:12px;color:#343741;font-family:'Liberation Mono', monospace;white-space:pre;-webkit-text-stroke:0.15px #343741;">URL</div><div style="position:absolute;left:370.5px;top:395.01px;font-size:12px;line-height:12px;color:#343741;font-family:'Liberation Mono', monospace;white-space:pre;-webkit-text-stroke:0.15px #343741;">Medium</div><div style="position:absolute;left:470.2px;top:395.01px;font-size:12px;line-height:12px;color:#343741;font-family:'Liberation Mono', monospace;white-space:pre;-webkit-text-stroke:0.15px #343741;">Sep 5, 2024 @ 09:10:57.881</div><div style="position:absolute;left:802.2px;top:395.01px;font-size:12px;line-height:12px;color:#343741;font-family:'Liberation Mono', monospace;white-space:pre;-webkit-text-stroke:0.15px #343741;">{"confidence":50,"created":"2024-09-11T16:53:36.009906Z","description":"nan","external_references":[{"source_name":"Forescout Vedere</div></div>
<div style="position:absolute;left:8px;top:1965px;width:1904px;height:1px;box-sizing:border-box;background:#D3DAE6;"></div>
<div style="position:absolute;left:17.90px;top:1979.23px;font-size:12.6px;line-height:12.6px;color:#343741;font-family:'Liberation Sans', sans-serif;white-space:pre;">Rows per page: 100</div>
<svg style="position:absolute;left:139.5px;top:1983px;" width="11" height="7" viewBox="0 0 11 7"><path d="M1 1 L5.5 5.2 L10 1" fill="none" stroke="#343741" stroke-width="1.2"/></svg>
<svg style="position:absolute;left:1749.5px;top:1980px;" width="8" height="13" viewBox="0 0 8 13"><path d="M6.8 0.8 L1 6.5 L6.8 12.2" fill="none" stroke="#A2ABBA" stroke-width="1.3"/></svg>
<div style="position:absolute;left:1076.40px;width:1400px;text-align:center;top:1978.45px;font-size:14.7px;line-height:14.7px;color:#0B64DD;font-family:'Liberation Sans', sans-serif;white-space:pre;font-weight:700;">1</div>
<div style="position:absolute;left:1772.5px;top:1991.7px;width:8.0px;height:1.5px;box-sizing:border-box;background:#0B64DD;"></div>
<div style="position:absolute;left:1099.60px;width:1400px;text-align:center;top:1978.45px;font-size:14.7px;line-height:14.7px;color:#343741;font-family:'Liberation Sans', sans-serif;white-space:pre;">2</div>
<div style="position:absolute;left:1124.50px;width:1400px;text-align:center;top:1978.45px;font-size:14.7px;line-height:14.7px;color:#343741;font-family:'Liberation Sans', sans-serif;white-space:pre;">3</div>
<div style="position:absolute;left:1149.40px;width:1400px;text-align:center;top:1978.45px;font-size:14.7px;line-height:14.7px;color:#343741;font-family:'Liberation Sans', sans-serif;white-space:pre;">4</div>
<div style="position:absolute;left:1174.30px;width:1400px;text-align:center;top:1978.45px;font-size:14.7px;line-height:14.7px;color:#343741;font-family:'Liberation Sans', sans-serif;white-space:pre;">5</div>
<svg style="position:absolute;left:1895px;top:1980px;" width="8" height="13" viewBox="0 0 8 13"><path d="M1.2 0.8 L7 6.5 L1.2 12.2" fill="none" stroke="#343741" stroke-width="1.3"/></svg>
<div style="position:absolute;left:0px;top:2011px;width:1920px;height:2px;box-sizing:border-box;background:#000;"></div>
</body></html>
